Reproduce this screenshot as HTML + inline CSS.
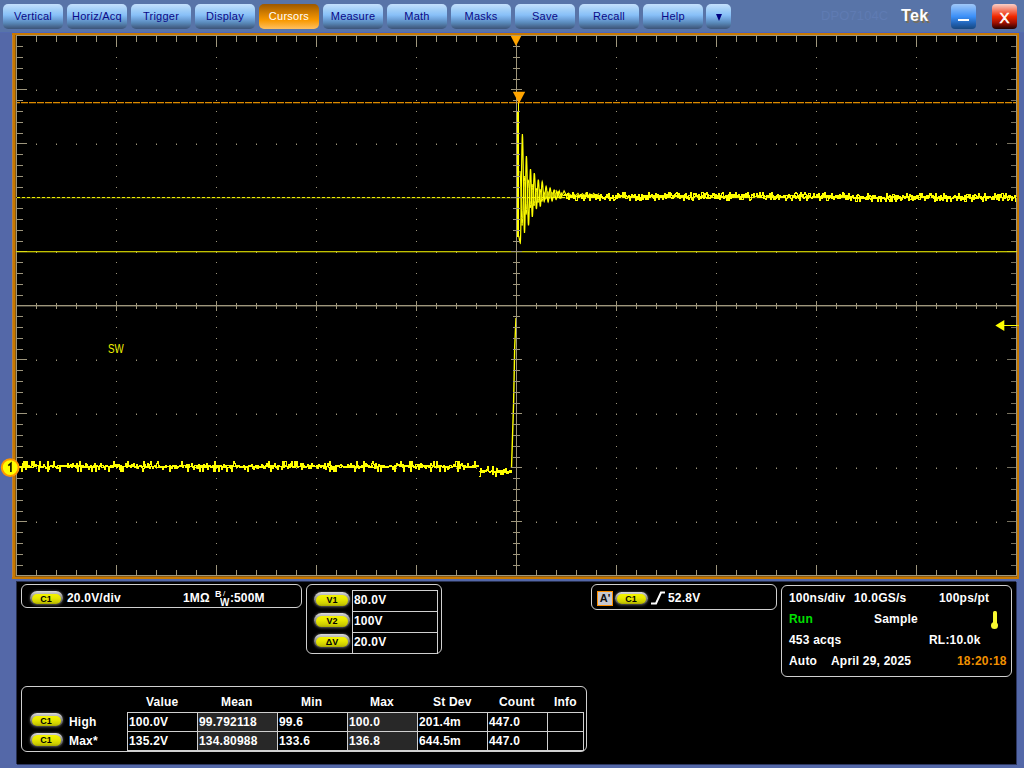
<!DOCTYPE html>
<html><head><meta charset="utf-8"><style>
*{margin:0;padding:0;box-sizing:border-box}
html,body{width:1024px;height:768px;overflow:hidden}
body{background:#5468a8;font-family:"Liberation Sans",sans-serif;position:relative}
.abs{position:absolute}
.scope{position:absolute;left:0;top:0}
.btn{position:absolute;top:4px;width:60px;height:25px;border-radius:5px;
 background:linear-gradient(#c4e0fc 0%,#a4d0f8 22%,#88c0f8 44%,#70a4dc 60%,#5888b8 76%,#486890 90%,#3c5478 100%);
 color:#0a0a88;font-size:11px;letter-spacing:0.25px;text-align:center;line-height:24px}
.btn.act{background:linear-gradient(#9c5800 0%,#d07c00 35%,#f89800 65%,#ffc060 100%);color:#fff}
.btn.dd{width:25px}
.panel{position:absolute;left:16px;top:581px;width:1000px;height:183px;background:#000;box-shadow:inset 1px 1px 0 #283050, 1px 1px 0 #2c3660}
.box{position:absolute;border:1px solid #d0d0d0;border-radius:6px}
.pill{position:absolute;border-radius:8px;background:linear-gradient(#dcdcdc 0%,#a8a8a8 30%,#686868 70%,#3a3a3a 100%);box-shadow:0 0 2px 1px rgba(45,45,45,0.9)}
.pill i{position:absolute;left:2px;right:2px;top:2.5px;bottom:1px;border-radius:7px;font-style:normal;text-align:center;font-weight:bold;color:#000;
 background:linear-gradient(#f4f400 0%,#e8e800 40%,#cccc00 80%,#a8a800 100%)}
.t{position:absolute;color:#fff;font-weight:bold;font-size:12px;white-space:nowrap;line-height:14px;letter-spacing:0.2px}
table.m{position:absolute;border-collapse:collapse}
table.m td{border:1px solid #d0d0d0;height:19px;padding:0 0 0 1px;color:#fff;font-weight:bold;font-size:12px;letter-spacing:0.2px}
</style></head><body>
<div class="abs" style="left:0;top:0;width:1024px;height:32px;background:#5874a8"></div>
<div class="abs" style="left:0;top:32px;width:1024px;height:1px;background:#536ab0"></div>
<div class="btn" style="left:3px">Vertical</div><div class="btn" style="left:67px">Horiz/Acq</div><div class="btn" style="left:131px">Trigger</div><div class="btn" style="left:195px">Display</div><div class="btn act" style="left:259px">Cursors</div><div class="btn" style="left:323px">Measure</div><div class="btn" style="left:387px">Math</div><div class="btn" style="left:451px">Masks</div><div class="btn" style="left:515px">Save</div><div class="btn" style="left:579px">Recall</div><div class="btn" style="left:643px">Help</div><div class="btn dd" style="left:706px"></div><div class="abs" style="left:715.5px;top:14px;width:0;height:0;border-left:3.5px solid transparent;border-right:3.5px solid transparent;border-top:7px solid #000080"></div>
<div class="t" style="left:821px;top:9px;color:#5f7bb3;font-size:13px;font-weight:normal;letter-spacing:0.1px">DPO7104C</div>
<div class="t" style="left:901px;top:6px;font-size:16px;line-height:20px;letter-spacing:0.4px;text-shadow:2px 2px 0 #7c7058">Tek</div>
<div class="abs" style="left:951px;top:4px;width:25px;height:25px;border-radius:4px;background:linear-gradient(#a0c8f8,#3c90f8 50%,#2060b0 80%,#184880)"></div>
<div class="abs" style="left:958px;top:19px;width:11px;height:2px;background:#fff"></div>
<div class="abs" style="left:992px;top:4px;width:25px;height:25px;border-radius:4px;background:linear-gradient(#f8d0c8,#f02800 50%,#a01000 75%,#200000)"></div>
<div class="t" style="left:992px;top:9px;width:25px;text-align:center;font-weight:normal;font-size:15px;line-height:18px;letter-spacing:0;-webkit-text-stroke:0.5px #fff">X</div>
<svg class="scope" width="1024" height="580" shape-rendering="crispEdges"><rect x="12" y="32" width="1008" height="1" fill="#4c66bc" /><rect x="12" y="33" width="1007" height="546" fill="#c87800" /><rect x="12" y="35" width="1" height="542" fill="#b88040" /><rect x="15" y="35" width="1" height="542" fill="#8a5a10" /><rect x="15" y="576" width="1002" height="1" fill="#8a5a10" /><rect x="16" y="35" width="1001" height="541" fill="#9e967c" /><rect x="17" y="36" width="999" height="539" fill="#000" /><rect x="116" y="46" width="1" height="1" fill="#9e967c" /><rect x="116" y="57" width="1" height="1" fill="#9e967c" /><rect x="116" y="68" width="1" height="1" fill="#9e967c" /><rect x="116" y="79" width="1" height="1" fill="#9e967c" /><rect x="116" y="89" width="1" height="1" fill="#9e967c" /><rect x="116" y="100" width="1" height="1" fill="#9e967c" /><rect x="116" y="111" width="1" height="1" fill="#9e967c" /><rect x="116" y="122" width="1" height="1" fill="#9e967c" /><rect x="116" y="133" width="1" height="1" fill="#9e967c" /><rect x="116" y="143" width="1" height="1" fill="#9e967c" /><rect x="116" y="154" width="1" height="1" fill="#9e967c" /><rect x="116" y="165" width="1" height="1" fill="#9e967c" /><rect x="116" y="176" width="1" height="1" fill="#9e967c" /><rect x="116" y="187" width="1" height="1" fill="#9e967c" /><rect x="116" y="197" width="1" height="1" fill="#9e967c" /><rect x="116" y="208" width="1" height="1" fill="#9e967c" /><rect x="116" y="219" width="1" height="1" fill="#9e967c" /><rect x="116" y="230" width="1" height="1" fill="#9e967c" /><rect x="116" y="241" width="1" height="1" fill="#9e967c" /><rect x="116" y="251" width="1" height="1" fill="#9e967c" /><rect x="116" y="262" width="1" height="1" fill="#9e967c" /><rect x="116" y="273" width="1" height="1" fill="#9e967c" /><rect x="116" y="284" width="1" height="1" fill="#9e967c" /><rect x="116" y="295" width="1" height="1" fill="#9e967c" /><rect x="116" y="305" width="1" height="1" fill="#9e967c" /><rect x="116" y="316" width="1" height="1" fill="#9e967c" /><rect x="116" y="327" width="1" height="1" fill="#9e967c" /><rect x="116" y="338" width="1" height="1" fill="#9e967c" /><rect x="116" y="349" width="1" height="1" fill="#9e967c" /><rect x="116" y="359" width="1" height="1" fill="#9e967c" /><rect x="116" y="370" width="1" height="1" fill="#9e967c" /><rect x="116" y="381" width="1" height="1" fill="#9e967c" /><rect x="116" y="392" width="1" height="1" fill="#9e967c" /><rect x="116" y="403" width="1" height="1" fill="#9e967c" /><rect x="116" y="413" width="1" height="1" fill="#9e967c" /><rect x="116" y="424" width="1" height="1" fill="#9e967c" /><rect x="116" y="435" width="1" height="1" fill="#9e967c" /><rect x="116" y="446" width="1" height="1" fill="#9e967c" /><rect x="116" y="457" width="1" height="1" fill="#9e967c" /><rect x="116" y="467" width="1" height="1" fill="#9e967c" /><rect x="116" y="478" width="1" height="1" fill="#9e967c" /><rect x="116" y="489" width="1" height="1" fill="#9e967c" /><rect x="116" y="500" width="1" height="1" fill="#9e967c" /><rect x="116" y="511" width="1" height="1" fill="#9e967c" /><rect x="116" y="521" width="1" height="1" fill="#9e967c" /><rect x="116" y="532" width="1" height="1" fill="#9e967c" /><rect x="116" y="543" width="1" height="1" fill="#9e967c" /><rect x="116" y="554" width="1" height="1" fill="#9e967c" /><rect x="116" y="565" width="1" height="1" fill="#9e967c" /><rect x="216" y="46" width="1" height="1" fill="#9e967c" /><rect x="216" y="57" width="1" height="1" fill="#9e967c" /><rect x="216" y="68" width="1" height="1" fill="#9e967c" /><rect x="216" y="79" width="1" height="1" fill="#9e967c" /><rect x="216" y="89" width="1" height="1" fill="#9e967c" /><rect x="216" y="100" width="1" height="1" fill="#9e967c" /><rect x="216" y="111" width="1" height="1" fill="#9e967c" /><rect x="216" y="122" width="1" height="1" fill="#9e967c" /><rect x="216" y="133" width="1" height="1" fill="#9e967c" /><rect x="216" y="143" width="1" height="1" fill="#9e967c" /><rect x="216" y="154" width="1" height="1" fill="#9e967c" /><rect x="216" y="165" width="1" height="1" fill="#9e967c" /><rect x="216" y="176" width="1" height="1" fill="#9e967c" /><rect x="216" y="187" width="1" height="1" fill="#9e967c" /><rect x="216" y="197" width="1" height="1" fill="#9e967c" /><rect x="216" y="208" width="1" height="1" fill="#9e967c" /><rect x="216" y="219" width="1" height="1" fill="#9e967c" /><rect x="216" y="230" width="1" height="1" fill="#9e967c" /><rect x="216" y="241" width="1" height="1" fill="#9e967c" /><rect x="216" y="251" width="1" height="1" fill="#9e967c" /><rect x="216" y="262" width="1" height="1" fill="#9e967c" /><rect x="216" y="273" width="1" height="1" fill="#9e967c" /><rect x="216" y="284" width="1" height="1" fill="#9e967c" /><rect x="216" y="295" width="1" height="1" fill="#9e967c" /><rect x="216" y="305" width="1" height="1" fill="#9e967c" /><rect x="216" y="316" width="1" height="1" fill="#9e967c" /><rect x="216" y="327" width="1" height="1" fill="#9e967c" /><rect x="216" y="338" width="1" height="1" fill="#9e967c" /><rect x="216" y="349" width="1" height="1" fill="#9e967c" /><rect x="216" y="359" width="1" height="1" fill="#9e967c" /><rect x="216" y="370" width="1" height="1" fill="#9e967c" /><rect x="216" y="381" width="1" height="1" fill="#9e967c" /><rect x="216" y="392" width="1" height="1" fill="#9e967c" /><rect x="216" y="403" width="1" height="1" fill="#9e967c" /><rect x="216" y="413" width="1" height="1" fill="#9e967c" /><rect x="216" y="424" width="1" height="1" fill="#9e967c" /><rect x="216" y="435" width="1" height="1" fill="#9e967c" /><rect x="216" y="446" width="1" height="1" fill="#9e967c" /><rect x="216" y="457" width="1" height="1" fill="#9e967c" /><rect x="216" y="467" width="1" height="1" fill="#9e967c" /><rect x="216" y="478" width="1" height="1" fill="#9e967c" /><rect x="216" y="489" width="1" height="1" fill="#9e967c" /><rect x="216" y="500" width="1" height="1" fill="#9e967c" /><rect x="216" y="511" width="1" height="1" fill="#9e967c" /><rect x="216" y="521" width="1" height="1" fill="#9e967c" /><rect x="216" y="532" width="1" height="1" fill="#9e967c" /><rect x="216" y="543" width="1" height="1" fill="#9e967c" /><rect x="216" y="554" width="1" height="1" fill="#9e967c" /><rect x="216" y="565" width="1" height="1" fill="#9e967c" /><rect x="316" y="46" width="1" height="1" fill="#9e967c" /><rect x="316" y="57" width="1" height="1" fill="#9e967c" /><rect x="316" y="68" width="1" height="1" fill="#9e967c" /><rect x="316" y="79" width="1" height="1" fill="#9e967c" /><rect x="316" y="89" width="1" height="1" fill="#9e967c" /><rect x="316" y="100" width="1" height="1" fill="#9e967c" /><rect x="316" y="111" width="1" height="1" fill="#9e967c" /><rect x="316" y="122" width="1" height="1" fill="#9e967c" /><rect x="316" y="133" width="1" height="1" fill="#9e967c" /><rect x="316" y="143" width="1" height="1" fill="#9e967c" /><rect x="316" y="154" width="1" height="1" fill="#9e967c" /><rect x="316" y="165" width="1" height="1" fill="#9e967c" /><rect x="316" y="176" width="1" height="1" fill="#9e967c" /><rect x="316" y="187" width="1" height="1" fill="#9e967c" /><rect x="316" y="197" width="1" height="1" fill="#9e967c" /><rect x="316" y="208" width="1" height="1" fill="#9e967c" /><rect x="316" y="219" width="1" height="1" fill="#9e967c" /><rect x="316" y="230" width="1" height="1" fill="#9e967c" /><rect x="316" y="241" width="1" height="1" fill="#9e967c" /><rect x="316" y="251" width="1" height="1" fill="#9e967c" /><rect x="316" y="262" width="1" height="1" fill="#9e967c" /><rect x="316" y="273" width="1" height="1" fill="#9e967c" /><rect x="316" y="284" width="1" height="1" fill="#9e967c" /><rect x="316" y="295" width="1" height="1" fill="#9e967c" /><rect x="316" y="305" width="1" height="1" fill="#9e967c" /><rect x="316" y="316" width="1" height="1" fill="#9e967c" /><rect x="316" y="327" width="1" height="1" fill="#9e967c" /><rect x="316" y="338" width="1" height="1" fill="#9e967c" /><rect x="316" y="349" width="1" height="1" fill="#9e967c" /><rect x="316" y="359" width="1" height="1" fill="#9e967c" /><rect x="316" y="370" width="1" height="1" fill="#9e967c" /><rect x="316" y="381" width="1" height="1" fill="#9e967c" /><rect x="316" y="392" width="1" height="1" fill="#9e967c" /><rect x="316" y="403" width="1" height="1" fill="#9e967c" /><rect x="316" y="413" width="1" height="1" fill="#9e967c" /><rect x="316" y="424" width="1" height="1" fill="#9e967c" /><rect x="316" y="435" width="1" height="1" fill="#9e967c" /><rect x="316" y="446" width="1" height="1" fill="#9e967c" /><rect x="316" y="457" width="1" height="1" fill="#9e967c" /><rect x="316" y="467" width="1" height="1" fill="#9e967c" /><rect x="316" y="478" width="1" height="1" fill="#9e967c" /><rect x="316" y="489" width="1" height="1" fill="#9e967c" /><rect x="316" y="500" width="1" height="1" fill="#9e967c" /><rect x="316" y="511" width="1" height="1" fill="#9e967c" /><rect x="316" y="521" width="1" height="1" fill="#9e967c" /><rect x="316" y="532" width="1" height="1" fill="#9e967c" /><rect x="316" y="543" width="1" height="1" fill="#9e967c" /><rect x="316" y="554" width="1" height="1" fill="#9e967c" /><rect x="316" y="565" width="1" height="1" fill="#9e967c" /><rect x="416" y="46" width="1" height="1" fill="#9e967c" /><rect x="416" y="57" width="1" height="1" fill="#9e967c" /><rect x="416" y="68" width="1" height="1" fill="#9e967c" /><rect x="416" y="79" width="1" height="1" fill="#9e967c" /><rect x="416" y="89" width="1" height="1" fill="#9e967c" /><rect x="416" y="100" width="1" height="1" fill="#9e967c" /><rect x="416" y="111" width="1" height="1" fill="#9e967c" /><rect x="416" y="122" width="1" height="1" fill="#9e967c" /><rect x="416" y="133" width="1" height="1" fill="#9e967c" /><rect x="416" y="143" width="1" height="1" fill="#9e967c" /><rect x="416" y="154" width="1" height="1" fill="#9e967c" /><rect x="416" y="165" width="1" height="1" fill="#9e967c" /><rect x="416" y="176" width="1" height="1" fill="#9e967c" /><rect x="416" y="187" width="1" height="1" fill="#9e967c" /><rect x="416" y="197" width="1" height="1" fill="#9e967c" /><rect x="416" y="208" width="1" height="1" fill="#9e967c" /><rect x="416" y="219" width="1" height="1" fill="#9e967c" /><rect x="416" y="230" width="1" height="1" fill="#9e967c" /><rect x="416" y="241" width="1" height="1" fill="#9e967c" /><rect x="416" y="251" width="1" height="1" fill="#9e967c" /><rect x="416" y="262" width="1" height="1" fill="#9e967c" /><rect x="416" y="273" width="1" height="1" fill="#9e967c" /><rect x="416" y="284" width="1" height="1" fill="#9e967c" /><rect x="416" y="295" width="1" height="1" fill="#9e967c" /><rect x="416" y="305" width="1" height="1" fill="#9e967c" /><rect x="416" y="316" width="1" height="1" fill="#9e967c" /><rect x="416" y="327" width="1" height="1" fill="#9e967c" /><rect x="416" y="338" width="1" height="1" fill="#9e967c" /><rect x="416" y="349" width="1" height="1" fill="#9e967c" /><rect x="416" y="359" width="1" height="1" fill="#9e967c" /><rect x="416" y="370" width="1" height="1" fill="#9e967c" /><rect x="416" y="381" width="1" height="1" fill="#9e967c" /><rect x="416" y="392" width="1" height="1" fill="#9e967c" /><rect x="416" y="403" width="1" height="1" fill="#9e967c" /><rect x="416" y="413" width="1" height="1" fill="#9e967c" /><rect x="416" y="424" width="1" height="1" fill="#9e967c" /><rect x="416" y="435" width="1" height="1" fill="#9e967c" /><rect x="416" y="446" width="1" height="1" fill="#9e967c" /><rect x="416" y="457" width="1" height="1" fill="#9e967c" /><rect x="416" y="467" width="1" height="1" fill="#9e967c" /><rect x="416" y="478" width="1" height="1" fill="#9e967c" /><rect x="416" y="489" width="1" height="1" fill="#9e967c" /><rect x="416" y="500" width="1" height="1" fill="#9e967c" /><rect x="416" y="511" width="1" height="1" fill="#9e967c" /><rect x="416" y="521" width="1" height="1" fill="#9e967c" /><rect x="416" y="532" width="1" height="1" fill="#9e967c" /><rect x="416" y="543" width="1" height="1" fill="#9e967c" /><rect x="416" y="554" width="1" height="1" fill="#9e967c" /><rect x="416" y="565" width="1" height="1" fill="#9e967c" /><rect x="616" y="46" width="1" height="1" fill="#9e967c" /><rect x="616" y="57" width="1" height="1" fill="#9e967c" /><rect x="616" y="68" width="1" height="1" fill="#9e967c" /><rect x="616" y="79" width="1" height="1" fill="#9e967c" /><rect x="616" y="89" width="1" height="1" fill="#9e967c" /><rect x="616" y="100" width="1" height="1" fill="#9e967c" /><rect x="616" y="111" width="1" height="1" fill="#9e967c" /><rect x="616" y="122" width="1" height="1" fill="#9e967c" /><rect x="616" y="133" width="1" height="1" fill="#9e967c" /><rect x="616" y="143" width="1" height="1" fill="#9e967c" /><rect x="616" y="154" width="1" height="1" fill="#9e967c" /><rect x="616" y="165" width="1" height="1" fill="#9e967c" /><rect x="616" y="176" width="1" height="1" fill="#9e967c" /><rect x="616" y="187" width="1" height="1" fill="#9e967c" /><rect x="616" y="197" width="1" height="1" fill="#9e967c" /><rect x="616" y="208" width="1" height="1" fill="#9e967c" /><rect x="616" y="219" width="1" height="1" fill="#9e967c" /><rect x="616" y="230" width="1" height="1" fill="#9e967c" /><rect x="616" y="241" width="1" height="1" fill="#9e967c" /><rect x="616" y="251" width="1" height="1" fill="#9e967c" /><rect x="616" y="262" width="1" height="1" fill="#9e967c" /><rect x="616" y="273" width="1" height="1" fill="#9e967c" /><rect x="616" y="284" width="1" height="1" fill="#9e967c" /><rect x="616" y="295" width="1" height="1" fill="#9e967c" /><rect x="616" y="305" width="1" height="1" fill="#9e967c" /><rect x="616" y="316" width="1" height="1" fill="#9e967c" /><rect x="616" y="327" width="1" height="1" fill="#9e967c" /><rect x="616" y="338" width="1" height="1" fill="#9e967c" /><rect x="616" y="349" width="1" height="1" fill="#9e967c" /><rect x="616" y="359" width="1" height="1" fill="#9e967c" /><rect x="616" y="370" width="1" height="1" fill="#9e967c" /><rect x="616" y="381" width="1" height="1" fill="#9e967c" /><rect x="616" y="392" width="1" height="1" fill="#9e967c" /><rect x="616" y="403" width="1" height="1" fill="#9e967c" /><rect x="616" y="413" width="1" height="1" fill="#9e967c" /><rect x="616" y="424" width="1" height="1" fill="#9e967c" /><rect x="616" y="435" width="1" height="1" fill="#9e967c" /><rect x="616" y="446" width="1" height="1" fill="#9e967c" /><rect x="616" y="457" width="1" height="1" fill="#9e967c" /><rect x="616" y="467" width="1" height="1" fill="#9e967c" /><rect x="616" y="478" width="1" height="1" fill="#9e967c" /><rect x="616" y="489" width="1" height="1" fill="#9e967c" /><rect x="616" y="500" width="1" height="1" fill="#9e967c" /><rect x="616" y="511" width="1" height="1" fill="#9e967c" /><rect x="616" y="521" width="1" height="1" fill="#9e967c" /><rect x="616" y="532" width="1" height="1" fill="#9e967c" /><rect x="616" y="543" width="1" height="1" fill="#9e967c" /><rect x="616" y="554" width="1" height="1" fill="#9e967c" /><rect x="616" y="565" width="1" height="1" fill="#9e967c" /><rect x="716" y="46" width="1" height="1" fill="#9e967c" /><rect x="716" y="57" width="1" height="1" fill="#9e967c" /><rect x="716" y="68" width="1" height="1" fill="#9e967c" /><rect x="716" y="79" width="1" height="1" fill="#9e967c" /><rect x="716" y="89" width="1" height="1" fill="#9e967c" /><rect x="716" y="100" width="1" height="1" fill="#9e967c" /><rect x="716" y="111" width="1" height="1" fill="#9e967c" /><rect x="716" y="122" width="1" height="1" fill="#9e967c" /><rect x="716" y="133" width="1" height="1" fill="#9e967c" /><rect x="716" y="143" width="1" height="1" fill="#9e967c" /><rect x="716" y="154" width="1" height="1" fill="#9e967c" /><rect x="716" y="165" width="1" height="1" fill="#9e967c" /><rect x="716" y="176" width="1" height="1" fill="#9e967c" /><rect x="716" y="187" width="1" height="1" fill="#9e967c" /><rect x="716" y="197" width="1" height="1" fill="#9e967c" /><rect x="716" y="208" width="1" height="1" fill="#9e967c" /><rect x="716" y="219" width="1" height="1" fill="#9e967c" /><rect x="716" y="230" width="1" height="1" fill="#9e967c" /><rect x="716" y="241" width="1" height="1" fill="#9e967c" /><rect x="716" y="251" width="1" height="1" fill="#9e967c" /><rect x="716" y="262" width="1" height="1" fill="#9e967c" /><rect x="716" y="273" width="1" height="1" fill="#9e967c" /><rect x="716" y="284" width="1" height="1" fill="#9e967c" /><rect x="716" y="295" width="1" height="1" fill="#9e967c" /><rect x="716" y="305" width="1" height="1" fill="#9e967c" /><rect x="716" y="316" width="1" height="1" fill="#9e967c" /><rect x="716" y="327" width="1" height="1" fill="#9e967c" /><rect x="716" y="338" width="1" height="1" fill="#9e967c" /><rect x="716" y="349" width="1" height="1" fill="#9e967c" /><rect x="716" y="359" width="1" height="1" fill="#9e967c" /><rect x="716" y="370" width="1" height="1" fill="#9e967c" /><rect x="716" y="381" width="1" height="1" fill="#9e967c" /><rect x="716" y="392" width="1" height="1" fill="#9e967c" /><rect x="716" y="403" width="1" height="1" fill="#9e967c" /><rect x="716" y="413" width="1" height="1" fill="#9e967c" /><rect x="716" y="424" width="1" height="1" fill="#9e967c" /><rect x="716" y="435" width="1" height="1" fill="#9e967c" /><rect x="716" y="446" width="1" height="1" fill="#9e967c" /><rect x="716" y="457" width="1" height="1" fill="#9e967c" /><rect x="716" y="467" width="1" height="1" fill="#9e967c" /><rect x="716" y="478" width="1" height="1" fill="#9e967c" /><rect x="716" y="489" width="1" height="1" fill="#9e967c" /><rect x="716" y="500" width="1" height="1" fill="#9e967c" /><rect x="716" y="511" width="1" height="1" fill="#9e967c" /><rect x="716" y="521" width="1" height="1" fill="#9e967c" /><rect x="716" y="532" width="1" height="1" fill="#9e967c" /><rect x="716" y="543" width="1" height="1" fill="#9e967c" /><rect x="716" y="554" width="1" height="1" fill="#9e967c" /><rect x="716" y="565" width="1" height="1" fill="#9e967c" /><rect x="816" y="46" width="1" height="1" fill="#9e967c" /><rect x="816" y="57" width="1" height="1" fill="#9e967c" /><rect x="816" y="68" width="1" height="1" fill="#9e967c" /><rect x="816" y="79" width="1" height="1" fill="#9e967c" /><rect x="816" y="89" width="1" height="1" fill="#9e967c" /><rect x="816" y="100" width="1" height="1" fill="#9e967c" /><rect x="816" y="111" width="1" height="1" fill="#9e967c" /><rect x="816" y="122" width="1" height="1" fill="#9e967c" /><rect x="816" y="133" width="1" height="1" fill="#9e967c" /><rect x="816" y="143" width="1" height="1" fill="#9e967c" /><rect x="816" y="154" width="1" height="1" fill="#9e967c" /><rect x="816" y="165" width="1" height="1" fill="#9e967c" /><rect x="816" y="176" width="1" height="1" fill="#9e967c" /><rect x="816" y="187" width="1" height="1" fill="#9e967c" /><rect x="816" y="197" width="1" height="1" fill="#9e967c" /><rect x="816" y="208" width="1" height="1" fill="#9e967c" /><rect x="816" y="219" width="1" height="1" fill="#9e967c" /><rect x="816" y="230" width="1" height="1" fill="#9e967c" /><rect x="816" y="241" width="1" height="1" fill="#9e967c" /><rect x="816" y="251" width="1" height="1" fill="#9e967c" /><rect x="816" y="262" width="1" height="1" fill="#9e967c" /><rect x="816" y="273" width="1" height="1" fill="#9e967c" /><rect x="816" y="284" width="1" height="1" fill="#9e967c" /><rect x="816" y="295" width="1" height="1" fill="#9e967c" /><rect x="816" y="305" width="1" height="1" fill="#9e967c" /><rect x="816" y="316" width="1" height="1" fill="#9e967c" /><rect x="816" y="327" width="1" height="1" fill="#9e967c" /><rect x="816" y="338" width="1" height="1" fill="#9e967c" /><rect x="816" y="349" width="1" height="1" fill="#9e967c" /><rect x="816" y="359" width="1" height="1" fill="#9e967c" /><rect x="816" y="370" width="1" height="1" fill="#9e967c" /><rect x="816" y="381" width="1" height="1" fill="#9e967c" /><rect x="816" y="392" width="1" height="1" fill="#9e967c" /><rect x="816" y="403" width="1" height="1" fill="#9e967c" /><rect x="816" y="413" width="1" height="1" fill="#9e967c" /><rect x="816" y="424" width="1" height="1" fill="#9e967c" /><rect x="816" y="435" width="1" height="1" fill="#9e967c" /><rect x="816" y="446" width="1" height="1" fill="#9e967c" /><rect x="816" y="457" width="1" height="1" fill="#9e967c" /><rect x="816" y="467" width="1" height="1" fill="#9e967c" /><rect x="816" y="478" width="1" height="1" fill="#9e967c" /><rect x="816" y="489" width="1" height="1" fill="#9e967c" /><rect x="816" y="500" width="1" height="1" fill="#9e967c" /><rect x="816" y="511" width="1" height="1" fill="#9e967c" /><rect x="816" y="521" width="1" height="1" fill="#9e967c" /><rect x="816" y="532" width="1" height="1" fill="#9e967c" /><rect x="816" y="543" width="1" height="1" fill="#9e967c" /><rect x="816" y="554" width="1" height="1" fill="#9e967c" /><rect x="816" y="565" width="1" height="1" fill="#9e967c" /><rect x="916" y="46" width="1" height="1" fill="#9e967c" /><rect x="916" y="57" width="1" height="1" fill="#9e967c" /><rect x="916" y="68" width="1" height="1" fill="#9e967c" /><rect x="916" y="79" width="1" height="1" fill="#9e967c" /><rect x="916" y="89" width="1" height="1" fill="#9e967c" /><rect x="916" y="100" width="1" height="1" fill="#9e967c" /><rect x="916" y="111" width="1" height="1" fill="#9e967c" /><rect x="916" y="122" width="1" height="1" fill="#9e967c" /><rect x="916" y="133" width="1" height="1" fill="#9e967c" /><rect x="916" y="143" width="1" height="1" fill="#9e967c" /><rect x="916" y="154" width="1" height="1" fill="#9e967c" /><rect x="916" y="165" width="1" height="1" fill="#9e967c" /><rect x="916" y="176" width="1" height="1" fill="#9e967c" /><rect x="916" y="187" width="1" height="1" fill="#9e967c" /><rect x="916" y="197" width="1" height="1" fill="#9e967c" /><rect x="916" y="208" width="1" height="1" fill="#9e967c" /><rect x="916" y="219" width="1" height="1" fill="#9e967c" /><rect x="916" y="230" width="1" height="1" fill="#9e967c" /><rect x="916" y="241" width="1" height="1" fill="#9e967c" /><rect x="916" y="251" width="1" height="1" fill="#9e967c" /><rect x="916" y="262" width="1" height="1" fill="#9e967c" /><rect x="916" y="273" width="1" height="1" fill="#9e967c" /><rect x="916" y="284" width="1" height="1" fill="#9e967c" /><rect x="916" y="295" width="1" height="1" fill="#9e967c" /><rect x="916" y="305" width="1" height="1" fill="#9e967c" /><rect x="916" y="316" width="1" height="1" fill="#9e967c" /><rect x="916" y="327" width="1" height="1" fill="#9e967c" /><rect x="916" y="338" width="1" height="1" fill="#9e967c" /><rect x="916" y="349" width="1" height="1" fill="#9e967c" /><rect x="916" y="359" width="1" height="1" fill="#9e967c" /><rect x="916" y="370" width="1" height="1" fill="#9e967c" /><rect x="916" y="381" width="1" height="1" fill="#9e967c" /><rect x="916" y="392" width="1" height="1" fill="#9e967c" /><rect x="916" y="403" width="1" height="1" fill="#9e967c" /><rect x="916" y="413" width="1" height="1" fill="#9e967c" /><rect x="916" y="424" width="1" height="1" fill="#9e967c" /><rect x="916" y="435" width="1" height="1" fill="#9e967c" /><rect x="916" y="446" width="1" height="1" fill="#9e967c" /><rect x="916" y="457" width="1" height="1" fill="#9e967c" /><rect x="916" y="467" width="1" height="1" fill="#9e967c" /><rect x="916" y="478" width="1" height="1" fill="#9e967c" /><rect x="916" y="489" width="1" height="1" fill="#9e967c" /><rect x="916" y="500" width="1" height="1" fill="#9e967c" /><rect x="916" y="511" width="1" height="1" fill="#9e967c" /><rect x="916" y="521" width="1" height="1" fill="#9e967c" /><rect x="916" y="532" width="1" height="1" fill="#9e967c" /><rect x="916" y="543" width="1" height="1" fill="#9e967c" /><rect x="916" y="554" width="1" height="1" fill="#9e967c" /><rect x="916" y="565" width="1" height="1" fill="#9e967c" /><rect x="36" y="89" width="1" height="1" fill="#4a4638" /><rect x="36" y="90" width="1" height="1" fill="#9e967c" /><rect x="56" y="89" width="1" height="1" fill="#4a4638" /><rect x="56" y="90" width="1" height="1" fill="#9e967c" /><rect x="76" y="89" width="1" height="1" fill="#4a4638" /><rect x="76" y="90" width="1" height="1" fill="#9e967c" /><rect x="96" y="89" width="1" height="1" fill="#4a4638" /><rect x="96" y="90" width="1" height="1" fill="#9e967c" /><rect x="116" y="89" width="1" height="1" fill="#4a4638" /><rect x="116" y="90" width="1" height="1" fill="#9e967c" /><rect x="136" y="89" width="1" height="1" fill="#4a4638" /><rect x="136" y="90" width="1" height="1" fill="#9e967c" /><rect x="156" y="89" width="1" height="1" fill="#4a4638" /><rect x="156" y="90" width="1" height="1" fill="#9e967c" /><rect x="176" y="89" width="1" height="1" fill="#4a4638" /><rect x="176" y="90" width="1" height="1" fill="#9e967c" /><rect x="196" y="89" width="1" height="1" fill="#4a4638" /><rect x="196" y="90" width="1" height="1" fill="#9e967c" /><rect x="216" y="89" width="1" height="1" fill="#4a4638" /><rect x="216" y="90" width="1" height="1" fill="#9e967c" /><rect x="236" y="89" width="1" height="1" fill="#4a4638" /><rect x="236" y="90" width="1" height="1" fill="#9e967c" /><rect x="256" y="89" width="1" height="1" fill="#4a4638" /><rect x="256" y="90" width="1" height="1" fill="#9e967c" /><rect x="276" y="89" width="1" height="1" fill="#4a4638" /><rect x="276" y="90" width="1" height="1" fill="#9e967c" /><rect x="296" y="89" width="1" height="1" fill="#4a4638" /><rect x="296" y="90" width="1" height="1" fill="#9e967c" /><rect x="316" y="89" width="1" height="1" fill="#4a4638" /><rect x="316" y="90" width="1" height="1" fill="#9e967c" /><rect x="336" y="89" width="1" height="1" fill="#4a4638" /><rect x="336" y="90" width="1" height="1" fill="#9e967c" /><rect x="356" y="89" width="1" height="1" fill="#4a4638" /><rect x="356" y="90" width="1" height="1" fill="#9e967c" /><rect x="376" y="89" width="1" height="1" fill="#4a4638" /><rect x="376" y="90" width="1" height="1" fill="#9e967c" /><rect x="396" y="89" width="1" height="1" fill="#4a4638" /><rect x="396" y="90" width="1" height="1" fill="#9e967c" /><rect x="416" y="89" width="1" height="1" fill="#4a4638" /><rect x="416" y="90" width="1" height="1" fill="#9e967c" /><rect x="436" y="89" width="1" height="1" fill="#4a4638" /><rect x="436" y="90" width="1" height="1" fill="#9e967c" /><rect x="456" y="89" width="1" height="1" fill="#4a4638" /><rect x="456" y="90" width="1" height="1" fill="#9e967c" /><rect x="476" y="89" width="1" height="1" fill="#4a4638" /><rect x="476" y="90" width="1" height="1" fill="#9e967c" /><rect x="496" y="89" width="1" height="1" fill="#4a4638" /><rect x="496" y="90" width="1" height="1" fill="#9e967c" /><rect x="516" y="89" width="1" height="1" fill="#4a4638" /><rect x="516" y="90" width="1" height="1" fill="#9e967c" /><rect x="536" y="89" width="1" height="1" fill="#4a4638" /><rect x="536" y="90" width="1" height="1" fill="#9e967c" /><rect x="556" y="89" width="1" height="1" fill="#4a4638" /><rect x="556" y="90" width="1" height="1" fill="#9e967c" /><rect x="576" y="89" width="1" height="1" fill="#4a4638" /><rect x="576" y="90" width="1" height="1" fill="#9e967c" /><rect x="596" y="89" width="1" height="1" fill="#4a4638" /><rect x="596" y="90" width="1" height="1" fill="#9e967c" /><rect x="616" y="89" width="1" height="1" fill="#4a4638" /><rect x="616" y="90" width="1" height="1" fill="#9e967c" /><rect x="636" y="89" width="1" height="1" fill="#4a4638" /><rect x="636" y="90" width="1" height="1" fill="#9e967c" /><rect x="656" y="89" width="1" height="1" fill="#4a4638" /><rect x="656" y="90" width="1" height="1" fill="#9e967c" /><rect x="676" y="89" width="1" height="1" fill="#4a4638" /><rect x="676" y="90" width="1" height="1" fill="#9e967c" /><rect x="696" y="89" width="1" height="1" fill="#4a4638" /><rect x="696" y="90" width="1" height="1" fill="#9e967c" /><rect x="716" y="89" width="1" height="1" fill="#4a4638" /><rect x="716" y="90" width="1" height="1" fill="#9e967c" /><rect x="736" y="89" width="1" height="1" fill="#4a4638" /><rect x="736" y="90" width="1" height="1" fill="#9e967c" /><rect x="756" y="89" width="1" height="1" fill="#4a4638" /><rect x="756" y="90" width="1" height="1" fill="#9e967c" /><rect x="776" y="89" width="1" height="1" fill="#4a4638" /><rect x="776" y="90" width="1" height="1" fill="#9e967c" /><rect x="796" y="89" width="1" height="1" fill="#4a4638" /><rect x="796" y="90" width="1" height="1" fill="#9e967c" /><rect x="816" y="89" width="1" height="1" fill="#4a4638" /><rect x="816" y="90" width="1" height="1" fill="#9e967c" /><rect x="836" y="89" width="1" height="1" fill="#4a4638" /><rect x="836" y="90" width="1" height="1" fill="#9e967c" /><rect x="856" y="89" width="1" height="1" fill="#4a4638" /><rect x="856" y="90" width="1" height="1" fill="#9e967c" /><rect x="876" y="89" width="1" height="1" fill="#4a4638" /><rect x="876" y="90" width="1" height="1" fill="#9e967c" /><rect x="896" y="89" width="1" height="1" fill="#4a4638" /><rect x="896" y="90" width="1" height="1" fill="#9e967c" /><rect x="916" y="89" width="1" height="1" fill="#4a4638" /><rect x="916" y="90" width="1" height="1" fill="#9e967c" /><rect x="936" y="89" width="1" height="1" fill="#4a4638" /><rect x="936" y="90" width="1" height="1" fill="#9e967c" /><rect x="956" y="89" width="1" height="1" fill="#4a4638" /><rect x="956" y="90" width="1" height="1" fill="#9e967c" /><rect x="976" y="89" width="1" height="1" fill="#4a4638" /><rect x="976" y="90" width="1" height="1" fill="#9e967c" /><rect x="996" y="89" width="1" height="1" fill="#4a4638" /><rect x="996" y="90" width="1" height="1" fill="#9e967c" /><rect x="36" y="143" width="1" height="1" fill="#4a4638" /><rect x="36" y="144" width="1" height="1" fill="#9e967c" /><rect x="56" y="143" width="1" height="1" fill="#4a4638" /><rect x="56" y="144" width="1" height="1" fill="#9e967c" /><rect x="76" y="143" width="1" height="1" fill="#4a4638" /><rect x="76" y="144" width="1" height="1" fill="#9e967c" /><rect x="96" y="143" width="1" height="1" fill="#4a4638" /><rect x="96" y="144" width="1" height="1" fill="#9e967c" /><rect x="116" y="143" width="1" height="1" fill="#4a4638" /><rect x="116" y="144" width="1" height="1" fill="#9e967c" /><rect x="136" y="143" width="1" height="1" fill="#4a4638" /><rect x="136" y="144" width="1" height="1" fill="#9e967c" /><rect x="156" y="143" width="1" height="1" fill="#4a4638" /><rect x="156" y="144" width="1" height="1" fill="#9e967c" /><rect x="176" y="143" width="1" height="1" fill="#4a4638" /><rect x="176" y="144" width="1" height="1" fill="#9e967c" /><rect x="196" y="143" width="1" height="1" fill="#4a4638" /><rect x="196" y="144" width="1" height="1" fill="#9e967c" /><rect x="216" y="143" width="1" height="1" fill="#4a4638" /><rect x="216" y="144" width="1" height="1" fill="#9e967c" /><rect x="236" y="143" width="1" height="1" fill="#4a4638" /><rect x="236" y="144" width="1" height="1" fill="#9e967c" /><rect x="256" y="143" width="1" height="1" fill="#4a4638" /><rect x="256" y="144" width="1" height="1" fill="#9e967c" /><rect x="276" y="143" width="1" height="1" fill="#4a4638" /><rect x="276" y="144" width="1" height="1" fill="#9e967c" /><rect x="296" y="143" width="1" height="1" fill="#4a4638" /><rect x="296" y="144" width="1" height="1" fill="#9e967c" /><rect x="316" y="143" width="1" height="1" fill="#4a4638" /><rect x="316" y="144" width="1" height="1" fill="#9e967c" /><rect x="336" y="143" width="1" height="1" fill="#4a4638" /><rect x="336" y="144" width="1" height="1" fill="#9e967c" /><rect x="356" y="143" width="1" height="1" fill="#4a4638" /><rect x="356" y="144" width="1" height="1" fill="#9e967c" /><rect x="376" y="143" width="1" height="1" fill="#4a4638" /><rect x="376" y="144" width="1" height="1" fill="#9e967c" /><rect x="396" y="143" width="1" height="1" fill="#4a4638" /><rect x="396" y="144" width="1" height="1" fill="#9e967c" /><rect x="416" y="143" width="1" height="1" fill="#4a4638" /><rect x="416" y="144" width="1" height="1" fill="#9e967c" /><rect x="436" y="143" width="1" height="1" fill="#4a4638" /><rect x="436" y="144" width="1" height="1" fill="#9e967c" /><rect x="456" y="143" width="1" height="1" fill="#4a4638" /><rect x="456" y="144" width="1" height="1" fill="#9e967c" /><rect x="476" y="143" width="1" height="1" fill="#4a4638" /><rect x="476" y="144" width="1" height="1" fill="#9e967c" /><rect x="496" y="143" width="1" height="1" fill="#4a4638" /><rect x="496" y="144" width="1" height="1" fill="#9e967c" /><rect x="516" y="143" width="1" height="1" fill="#4a4638" /><rect x="516" y="144" width="1" height="1" fill="#9e967c" /><rect x="536" y="143" width="1" height="1" fill="#4a4638" /><rect x="536" y="144" width="1" height="1" fill="#9e967c" /><rect x="556" y="143" width="1" height="1" fill="#4a4638" /><rect x="556" y="144" width="1" height="1" fill="#9e967c" /><rect x="576" y="143" width="1" height="1" fill="#4a4638" /><rect x="576" y="144" width="1" height="1" fill="#9e967c" /><rect x="596" y="143" width="1" height="1" fill="#4a4638" /><rect x="596" y="144" width="1" height="1" fill="#9e967c" /><rect x="616" y="143" width="1" height="1" fill="#4a4638" /><rect x="616" y="144" width="1" height="1" fill="#9e967c" /><rect x="636" y="143" width="1" height="1" fill="#4a4638" /><rect x="636" y="144" width="1" height="1" fill="#9e967c" /><rect x="656" y="143" width="1" height="1" fill="#4a4638" /><rect x="656" y="144" width="1" height="1" fill="#9e967c" /><rect x="676" y="143" width="1" height="1" fill="#4a4638" /><rect x="676" y="144" width="1" height="1" fill="#9e967c" /><rect x="696" y="143" width="1" height="1" fill="#4a4638" /><rect x="696" y="144" width="1" height="1" fill="#9e967c" /><rect x="716" y="143" width="1" height="1" fill="#4a4638" /><rect x="716" y="144" width="1" height="1" fill="#9e967c" /><rect x="736" y="143" width="1" height="1" fill="#4a4638" /><rect x="736" y="144" width="1" height="1" fill="#9e967c" /><rect x="756" y="143" width="1" height="1" fill="#4a4638" /><rect x="756" y="144" width="1" height="1" fill="#9e967c" /><rect x="776" y="143" width="1" height="1" fill="#4a4638" /><rect x="776" y="144" width="1" height="1" fill="#9e967c" /><rect x="796" y="143" width="1" height="1" fill="#4a4638" /><rect x="796" y="144" width="1" height="1" fill="#9e967c" /><rect x="816" y="143" width="1" height="1" fill="#4a4638" /><rect x="816" y="144" width="1" height="1" fill="#9e967c" /><rect x="836" y="143" width="1" height="1" fill="#4a4638" /><rect x="836" y="144" width="1" height="1" fill="#9e967c" /><rect x="856" y="143" width="1" height="1" fill="#4a4638" /><rect x="856" y="144" width="1" height="1" fill="#9e967c" /><rect x="876" y="143" width="1" height="1" fill="#4a4638" /><rect x="876" y="144" width="1" height="1" fill="#9e967c" /><rect x="896" y="143" width="1" height="1" fill="#4a4638" /><rect x="896" y="144" width="1" height="1" fill="#9e967c" /><rect x="916" y="143" width="1" height="1" fill="#4a4638" /><rect x="916" y="144" width="1" height="1" fill="#9e967c" /><rect x="936" y="143" width="1" height="1" fill="#4a4638" /><rect x="936" y="144" width="1" height="1" fill="#9e967c" /><rect x="956" y="143" width="1" height="1" fill="#4a4638" /><rect x="956" y="144" width="1" height="1" fill="#9e967c" /><rect x="976" y="143" width="1" height="1" fill="#4a4638" /><rect x="976" y="144" width="1" height="1" fill="#9e967c" /><rect x="996" y="143" width="1" height="1" fill="#4a4638" /><rect x="996" y="144" width="1" height="1" fill="#9e967c" /><rect x="36" y="197" width="1" height="1" fill="#4a4638" /><rect x="36" y="198" width="1" height="1" fill="#9e967c" /><rect x="56" y="197" width="1" height="1" fill="#4a4638" /><rect x="56" y="198" width="1" height="1" fill="#9e967c" /><rect x="76" y="197" width="1" height="1" fill="#4a4638" /><rect x="76" y="198" width="1" height="1" fill="#9e967c" /><rect x="96" y="197" width="1" height="1" fill="#4a4638" /><rect x="96" y="198" width="1" height="1" fill="#9e967c" /><rect x="116" y="197" width="1" height="1" fill="#4a4638" /><rect x="116" y="198" width="1" height="1" fill="#9e967c" /><rect x="136" y="197" width="1" height="1" fill="#4a4638" /><rect x="136" y="198" width="1" height="1" fill="#9e967c" /><rect x="156" y="197" width="1" height="1" fill="#4a4638" /><rect x="156" y="198" width="1" height="1" fill="#9e967c" /><rect x="176" y="197" width="1" height="1" fill="#4a4638" /><rect x="176" y="198" width="1" height="1" fill="#9e967c" /><rect x="196" y="197" width="1" height="1" fill="#4a4638" /><rect x="196" y="198" width="1" height="1" fill="#9e967c" /><rect x="216" y="197" width="1" height="1" fill="#4a4638" /><rect x="216" y="198" width="1" height="1" fill="#9e967c" /><rect x="236" y="197" width="1" height="1" fill="#4a4638" /><rect x="236" y="198" width="1" height="1" fill="#9e967c" /><rect x="256" y="197" width="1" height="1" fill="#4a4638" /><rect x="256" y="198" width="1" height="1" fill="#9e967c" /><rect x="276" y="197" width="1" height="1" fill="#4a4638" /><rect x="276" y="198" width="1" height="1" fill="#9e967c" /><rect x="296" y="197" width="1" height="1" fill="#4a4638" /><rect x="296" y="198" width="1" height="1" fill="#9e967c" /><rect x="316" y="197" width="1" height="1" fill="#4a4638" /><rect x="316" y="198" width="1" height="1" fill="#9e967c" /><rect x="336" y="197" width="1" height="1" fill="#4a4638" /><rect x="336" y="198" width="1" height="1" fill="#9e967c" /><rect x="356" y="197" width="1" height="1" fill="#4a4638" /><rect x="356" y="198" width="1" height="1" fill="#9e967c" /><rect x="376" y="197" width="1" height="1" fill="#4a4638" /><rect x="376" y="198" width="1" height="1" fill="#9e967c" /><rect x="396" y="197" width="1" height="1" fill="#4a4638" /><rect x="396" y="198" width="1" height="1" fill="#9e967c" /><rect x="416" y="197" width="1" height="1" fill="#4a4638" /><rect x="416" y="198" width="1" height="1" fill="#9e967c" /><rect x="436" y="197" width="1" height="1" fill="#4a4638" /><rect x="436" y="198" width="1" height="1" fill="#9e967c" /><rect x="456" y="197" width="1" height="1" fill="#4a4638" /><rect x="456" y="198" width="1" height="1" fill="#9e967c" /><rect x="476" y="197" width="1" height="1" fill="#4a4638" /><rect x="476" y="198" width="1" height="1" fill="#9e967c" /><rect x="496" y="197" width="1" height="1" fill="#4a4638" /><rect x="496" y="198" width="1" height="1" fill="#9e967c" /><rect x="516" y="197" width="1" height="1" fill="#4a4638" /><rect x="516" y="198" width="1" height="1" fill="#9e967c" /><rect x="536" y="197" width="1" height="1" fill="#4a4638" /><rect x="536" y="198" width="1" height="1" fill="#9e967c" /><rect x="556" y="197" width="1" height="1" fill="#4a4638" /><rect x="556" y="198" width="1" height="1" fill="#9e967c" /><rect x="576" y="197" width="1" height="1" fill="#4a4638" /><rect x="576" y="198" width="1" height="1" fill="#9e967c" /><rect x="596" y="197" width="1" height="1" fill="#4a4638" /><rect x="596" y="198" width="1" height="1" fill="#9e967c" /><rect x="616" y="197" width="1" height="1" fill="#4a4638" /><rect x="616" y="198" width="1" height="1" fill="#9e967c" /><rect x="636" y="197" width="1" height="1" fill="#4a4638" /><rect x="636" y="198" width="1" height="1" fill="#9e967c" /><rect x="656" y="197" width="1" height="1" fill="#4a4638" /><rect x="656" y="198" width="1" height="1" fill="#9e967c" /><rect x="676" y="197" width="1" height="1" fill="#4a4638" /><rect x="676" y="198" width="1" height="1" fill="#9e967c" /><rect x="696" y="197" width="1" height="1" fill="#4a4638" /><rect x="696" y="198" width="1" height="1" fill="#9e967c" /><rect x="716" y="197" width="1" height="1" fill="#4a4638" /><rect x="716" y="198" width="1" height="1" fill="#9e967c" /><rect x="736" y="197" width="1" height="1" fill="#4a4638" /><rect x="736" y="198" width="1" height="1" fill="#9e967c" /><rect x="756" y="197" width="1" height="1" fill="#4a4638" /><rect x="756" y="198" width="1" height="1" fill="#9e967c" /><rect x="776" y="197" width="1" height="1" fill="#4a4638" /><rect x="776" y="198" width="1" height="1" fill="#9e967c" /><rect x="796" y="197" width="1" height="1" fill="#4a4638" /><rect x="796" y="198" width="1" height="1" fill="#9e967c" /><rect x="816" y="197" width="1" height="1" fill="#4a4638" /><rect x="816" y="198" width="1" height="1" fill="#9e967c" /><rect x="836" y="197" width="1" height="1" fill="#4a4638" /><rect x="836" y="198" width="1" height="1" fill="#9e967c" /><rect x="856" y="197" width="1" height="1" fill="#4a4638" /><rect x="856" y="198" width="1" height="1" fill="#9e967c" /><rect x="876" y="197" width="1" height="1" fill="#4a4638" /><rect x="876" y="198" width="1" height="1" fill="#9e967c" /><rect x="896" y="197" width="1" height="1" fill="#4a4638" /><rect x="896" y="198" width="1" height="1" fill="#9e967c" /><rect x="916" y="197" width="1" height="1" fill="#4a4638" /><rect x="916" y="198" width="1" height="1" fill="#9e967c" /><rect x="936" y="197" width="1" height="1" fill="#4a4638" /><rect x="936" y="198" width="1" height="1" fill="#9e967c" /><rect x="956" y="197" width="1" height="1" fill="#4a4638" /><rect x="956" y="198" width="1" height="1" fill="#9e967c" /><rect x="976" y="197" width="1" height="1" fill="#4a4638" /><rect x="976" y="198" width="1" height="1" fill="#9e967c" /><rect x="996" y="197" width="1" height="1" fill="#4a4638" /><rect x="996" y="198" width="1" height="1" fill="#9e967c" /><rect x="36" y="251" width="1" height="1" fill="#4a4638" /><rect x="36" y="252" width="1" height="1" fill="#9e967c" /><rect x="56" y="251" width="1" height="1" fill="#4a4638" /><rect x="56" y="252" width="1" height="1" fill="#9e967c" /><rect x="76" y="251" width="1" height="1" fill="#4a4638" /><rect x="76" y="252" width="1" height="1" fill="#9e967c" /><rect x="96" y="251" width="1" height="1" fill="#4a4638" /><rect x="96" y="252" width="1" height="1" fill="#9e967c" /><rect x="116" y="251" width="1" height="1" fill="#4a4638" /><rect x="116" y="252" width="1" height="1" fill="#9e967c" /><rect x="136" y="251" width="1" height="1" fill="#4a4638" /><rect x="136" y="252" width="1" height="1" fill="#9e967c" /><rect x="156" y="251" width="1" height="1" fill="#4a4638" /><rect x="156" y="252" width="1" height="1" fill="#9e967c" /><rect x="176" y="251" width="1" height="1" fill="#4a4638" /><rect x="176" y="252" width="1" height="1" fill="#9e967c" /><rect x="196" y="251" width="1" height="1" fill="#4a4638" /><rect x="196" y="252" width="1" height="1" fill="#9e967c" /><rect x="216" y="251" width="1" height="1" fill="#4a4638" /><rect x="216" y="252" width="1" height="1" fill="#9e967c" /><rect x="236" y="251" width="1" height="1" fill="#4a4638" /><rect x="236" y="252" width="1" height="1" fill="#9e967c" /><rect x="256" y="251" width="1" height="1" fill="#4a4638" /><rect x="256" y="252" width="1" height="1" fill="#9e967c" /><rect x="276" y="251" width="1" height="1" fill="#4a4638" /><rect x="276" y="252" width="1" height="1" fill="#9e967c" /><rect x="296" y="251" width="1" height="1" fill="#4a4638" /><rect x="296" y="252" width="1" height="1" fill="#9e967c" /><rect x="316" y="251" width="1" height="1" fill="#4a4638" /><rect x="316" y="252" width="1" height="1" fill="#9e967c" /><rect x="336" y="251" width="1" height="1" fill="#4a4638" /><rect x="336" y="252" width="1" height="1" fill="#9e967c" /><rect x="356" y="251" width="1" height="1" fill="#4a4638" /><rect x="356" y="252" width="1" height="1" fill="#9e967c" /><rect x="376" y="251" width="1" height="1" fill="#4a4638" /><rect x="376" y="252" width="1" height="1" fill="#9e967c" /><rect x="396" y="251" width="1" height="1" fill="#4a4638" /><rect x="396" y="252" width="1" height="1" fill="#9e967c" /><rect x="416" y="251" width="1" height="1" fill="#4a4638" /><rect x="416" y="252" width="1" height="1" fill="#9e967c" /><rect x="436" y="251" width="1" height="1" fill="#4a4638" /><rect x="436" y="252" width="1" height="1" fill="#9e967c" /><rect x="456" y="251" width="1" height="1" fill="#4a4638" /><rect x="456" y="252" width="1" height="1" fill="#9e967c" /><rect x="476" y="251" width="1" height="1" fill="#4a4638" /><rect x="476" y="252" width="1" height="1" fill="#9e967c" /><rect x="496" y="251" width="1" height="1" fill="#4a4638" /><rect x="496" y="252" width="1" height="1" fill="#9e967c" /><rect x="516" y="251" width="1" height="1" fill="#4a4638" /><rect x="516" y="252" width="1" height="1" fill="#9e967c" /><rect x="536" y="251" width="1" height="1" fill="#4a4638" /><rect x="536" y="252" width="1" height="1" fill="#9e967c" /><rect x="556" y="251" width="1" height="1" fill="#4a4638" /><rect x="556" y="252" width="1" height="1" fill="#9e967c" /><rect x="576" y="251" width="1" height="1" fill="#4a4638" /><rect x="576" y="252" width="1" height="1" fill="#9e967c" /><rect x="596" y="251" width="1" height="1" fill="#4a4638" /><rect x="596" y="252" width="1" height="1" fill="#9e967c" /><rect x="616" y="251" width="1" height="1" fill="#4a4638" /><rect x="616" y="252" width="1" height="1" fill="#9e967c" /><rect x="636" y="251" width="1" height="1" fill="#4a4638" /><rect x="636" y="252" width="1" height="1" fill="#9e967c" /><rect x="656" y="251" width="1" height="1" fill="#4a4638" /><rect x="656" y="252" width="1" height="1" fill="#9e967c" /><rect x="676" y="251" width="1" height="1" fill="#4a4638" /><rect x="676" y="252" width="1" height="1" fill="#9e967c" /><rect x="696" y="251" width="1" height="1" fill="#4a4638" /><rect x="696" y="252" width="1" height="1" fill="#9e967c" /><rect x="716" y="251" width="1" height="1" fill="#4a4638" /><rect x="716" y="252" width="1" height="1" fill="#9e967c" /><rect x="736" y="251" width="1" height="1" fill="#4a4638" /><rect x="736" y="252" width="1" height="1" fill="#9e967c" /><rect x="756" y="251" width="1" height="1" fill="#4a4638" /><rect x="756" y="252" width="1" height="1" fill="#9e967c" /><rect x="776" y="251" width="1" height="1" fill="#4a4638" /><rect x="776" y="252" width="1" height="1" fill="#9e967c" /><rect x="796" y="251" width="1" height="1" fill="#4a4638" /><rect x="796" y="252" width="1" height="1" fill="#9e967c" /><rect x="816" y="251" width="1" height="1" fill="#4a4638" /><rect x="816" y="252" width="1" height="1" fill="#9e967c" /><rect x="836" y="251" width="1" height="1" fill="#4a4638" /><rect x="836" y="252" width="1" height="1" fill="#9e967c" /><rect x="856" y="251" width="1" height="1" fill="#4a4638" /><rect x="856" y="252" width="1" height="1" fill="#9e967c" /><rect x="876" y="251" width="1" height="1" fill="#4a4638" /><rect x="876" y="252" width="1" height="1" fill="#9e967c" /><rect x="896" y="251" width="1" height="1" fill="#4a4638" /><rect x="896" y="252" width="1" height="1" fill="#9e967c" /><rect x="916" y="251" width="1" height="1" fill="#4a4638" /><rect x="916" y="252" width="1" height="1" fill="#9e967c" /><rect x="936" y="251" width="1" height="1" fill="#4a4638" /><rect x="936" y="252" width="1" height="1" fill="#9e967c" /><rect x="956" y="251" width="1" height="1" fill="#4a4638" /><rect x="956" y="252" width="1" height="1" fill="#9e967c" /><rect x="976" y="251" width="1" height="1" fill="#4a4638" /><rect x="976" y="252" width="1" height="1" fill="#9e967c" /><rect x="996" y="251" width="1" height="1" fill="#4a4638" /><rect x="996" y="252" width="1" height="1" fill="#9e967c" /><rect x="36" y="359" width="1" height="1" fill="#4a4638" /><rect x="36" y="360" width="1" height="1" fill="#9e967c" /><rect x="56" y="359" width="1" height="1" fill="#4a4638" /><rect x="56" y="360" width="1" height="1" fill="#9e967c" /><rect x="76" y="359" width="1" height="1" fill="#4a4638" /><rect x="76" y="360" width="1" height="1" fill="#9e967c" /><rect x="96" y="359" width="1" height="1" fill="#4a4638" /><rect x="96" y="360" width="1" height="1" fill="#9e967c" /><rect x="116" y="359" width="1" height="1" fill="#4a4638" /><rect x="116" y="360" width="1" height="1" fill="#9e967c" /><rect x="136" y="359" width="1" height="1" fill="#4a4638" /><rect x="136" y="360" width="1" height="1" fill="#9e967c" /><rect x="156" y="359" width="1" height="1" fill="#4a4638" /><rect x="156" y="360" width="1" height="1" fill="#9e967c" /><rect x="176" y="359" width="1" height="1" fill="#4a4638" /><rect x="176" y="360" width="1" height="1" fill="#9e967c" /><rect x="196" y="359" width="1" height="1" fill="#4a4638" /><rect x="196" y="360" width="1" height="1" fill="#9e967c" /><rect x="216" y="359" width="1" height="1" fill="#4a4638" /><rect x="216" y="360" width="1" height="1" fill="#9e967c" /><rect x="236" y="359" width="1" height="1" fill="#4a4638" /><rect x="236" y="360" width="1" height="1" fill="#9e967c" /><rect x="256" y="359" width="1" height="1" fill="#4a4638" /><rect x="256" y="360" width="1" height="1" fill="#9e967c" /><rect x="276" y="359" width="1" height="1" fill="#4a4638" /><rect x="276" y="360" width="1" height="1" fill="#9e967c" /><rect x="296" y="359" width="1" height="1" fill="#4a4638" /><rect x="296" y="360" width="1" height="1" fill="#9e967c" /><rect x="316" y="359" width="1" height="1" fill="#4a4638" /><rect x="316" y="360" width="1" height="1" fill="#9e967c" /><rect x="336" y="359" width="1" height="1" fill="#4a4638" /><rect x="336" y="360" width="1" height="1" fill="#9e967c" /><rect x="356" y="359" width="1" height="1" fill="#4a4638" /><rect x="356" y="360" width="1" height="1" fill="#9e967c" /><rect x="376" y="359" width="1" height="1" fill="#4a4638" /><rect x="376" y="360" width="1" height="1" fill="#9e967c" /><rect x="396" y="359" width="1" height="1" fill="#4a4638" /><rect x="396" y="360" width="1" height="1" fill="#9e967c" /><rect x="416" y="359" width="1" height="1" fill="#4a4638" /><rect x="416" y="360" width="1" height="1" fill="#9e967c" /><rect x="436" y="359" width="1" height="1" fill="#4a4638" /><rect x="436" y="360" width="1" height="1" fill="#9e967c" /><rect x="456" y="359" width="1" height="1" fill="#4a4638" /><rect x="456" y="360" width="1" height="1" fill="#9e967c" /><rect x="476" y="359" width="1" height="1" fill="#4a4638" /><rect x="476" y="360" width="1" height="1" fill="#9e967c" /><rect x="496" y="359" width="1" height="1" fill="#4a4638" /><rect x="496" y="360" width="1" height="1" fill="#9e967c" /><rect x="516" y="359" width="1" height="1" fill="#4a4638" /><rect x="516" y="360" width="1" height="1" fill="#9e967c" /><rect x="536" y="359" width="1" height="1" fill="#4a4638" /><rect x="536" y="360" width="1" height="1" fill="#9e967c" /><rect x="556" y="359" width="1" height="1" fill="#4a4638" /><rect x="556" y="360" width="1" height="1" fill="#9e967c" /><rect x="576" y="359" width="1" height="1" fill="#4a4638" /><rect x="576" y="360" width="1" height="1" fill="#9e967c" /><rect x="596" y="359" width="1" height="1" fill="#4a4638" /><rect x="596" y="360" width="1" height="1" fill="#9e967c" /><rect x="616" y="359" width="1" height="1" fill="#4a4638" /><rect x="616" y="360" width="1" height="1" fill="#9e967c" /><rect x="636" y="359" width="1" height="1" fill="#4a4638" /><rect x="636" y="360" width="1" height="1" fill="#9e967c" /><rect x="656" y="359" width="1" height="1" fill="#4a4638" /><rect x="656" y="360" width="1" height="1" fill="#9e967c" /><rect x="676" y="359" width="1" height="1" fill="#4a4638" /><rect x="676" y="360" width="1" height="1" fill="#9e967c" /><rect x="696" y="359" width="1" height="1" fill="#4a4638" /><rect x="696" y="360" width="1" height="1" fill="#9e967c" /><rect x="716" y="359" width="1" height="1" fill="#4a4638" /><rect x="716" y="360" width="1" height="1" fill="#9e967c" /><rect x="736" y="359" width="1" height="1" fill="#4a4638" /><rect x="736" y="360" width="1" height="1" fill="#9e967c" /><rect x="756" y="359" width="1" height="1" fill="#4a4638" /><rect x="756" y="360" width="1" height="1" fill="#9e967c" /><rect x="776" y="359" width="1" height="1" fill="#4a4638" /><rect x="776" y="360" width="1" height="1" fill="#9e967c" /><rect x="796" y="359" width="1" height="1" fill="#4a4638" /><rect x="796" y="360" width="1" height="1" fill="#9e967c" /><rect x="816" y="359" width="1" height="1" fill="#4a4638" /><rect x="816" y="360" width="1" height="1" fill="#9e967c" /><rect x="836" y="359" width="1" height="1" fill="#4a4638" /><rect x="836" y="360" width="1" height="1" fill="#9e967c" /><rect x="856" y="359" width="1" height="1" fill="#4a4638" /><rect x="856" y="360" width="1" height="1" fill="#9e967c" /><rect x="876" y="359" width="1" height="1" fill="#4a4638" /><rect x="876" y="360" width="1" height="1" fill="#9e967c" /><rect x="896" y="359" width="1" height="1" fill="#4a4638" /><rect x="896" y="360" width="1" height="1" fill="#9e967c" /><rect x="916" y="359" width="1" height="1" fill="#4a4638" /><rect x="916" y="360" width="1" height="1" fill="#9e967c" /><rect x="936" y="359" width="1" height="1" fill="#4a4638" /><rect x="936" y="360" width="1" height="1" fill="#9e967c" /><rect x="956" y="359" width="1" height="1" fill="#4a4638" /><rect x="956" y="360" width="1" height="1" fill="#9e967c" /><rect x="976" y="359" width="1" height="1" fill="#4a4638" /><rect x="976" y="360" width="1" height="1" fill="#9e967c" /><rect x="996" y="359" width="1" height="1" fill="#4a4638" /><rect x="996" y="360" width="1" height="1" fill="#9e967c" /><rect x="36" y="413" width="1" height="1" fill="#4a4638" /><rect x="36" y="414" width="1" height="1" fill="#9e967c" /><rect x="56" y="413" width="1" height="1" fill="#4a4638" /><rect x="56" y="414" width="1" height="1" fill="#9e967c" /><rect x="76" y="413" width="1" height="1" fill="#4a4638" /><rect x="76" y="414" width="1" height="1" fill="#9e967c" /><rect x="96" y="413" width="1" height="1" fill="#4a4638" /><rect x="96" y="414" width="1" height="1" fill="#9e967c" /><rect x="116" y="413" width="1" height="1" fill="#4a4638" /><rect x="116" y="414" width="1" height="1" fill="#9e967c" /><rect x="136" y="413" width="1" height="1" fill="#4a4638" /><rect x="136" y="414" width="1" height="1" fill="#9e967c" /><rect x="156" y="413" width="1" height="1" fill="#4a4638" /><rect x="156" y="414" width="1" height="1" fill="#9e967c" /><rect x="176" y="413" width="1" height="1" fill="#4a4638" /><rect x="176" y="414" width="1" height="1" fill="#9e967c" /><rect x="196" y="413" width="1" height="1" fill="#4a4638" /><rect x="196" y="414" width="1" height="1" fill="#9e967c" /><rect x="216" y="413" width="1" height="1" fill="#4a4638" /><rect x="216" y="414" width="1" height="1" fill="#9e967c" /><rect x="236" y="413" width="1" height="1" fill="#4a4638" /><rect x="236" y="414" width="1" height="1" fill="#9e967c" /><rect x="256" y="413" width="1" height="1" fill="#4a4638" /><rect x="256" y="414" width="1" height="1" fill="#9e967c" /><rect x="276" y="413" width="1" height="1" fill="#4a4638" /><rect x="276" y="414" width="1" height="1" fill="#9e967c" /><rect x="296" y="413" width="1" height="1" fill="#4a4638" /><rect x="296" y="414" width="1" height="1" fill="#9e967c" /><rect x="316" y="413" width="1" height="1" fill="#4a4638" /><rect x="316" y="414" width="1" height="1" fill="#9e967c" /><rect x="336" y="413" width="1" height="1" fill="#4a4638" /><rect x="336" y="414" width="1" height="1" fill="#9e967c" /><rect x="356" y="413" width="1" height="1" fill="#4a4638" /><rect x="356" y="414" width="1" height="1" fill="#9e967c" /><rect x="376" y="413" width="1" height="1" fill="#4a4638" /><rect x="376" y="414" width="1" height="1" fill="#9e967c" /><rect x="396" y="413" width="1" height="1" fill="#4a4638" /><rect x="396" y="414" width="1" height="1" fill="#9e967c" /><rect x="416" y="413" width="1" height="1" fill="#4a4638" /><rect x="416" y="414" width="1" height="1" fill="#9e967c" /><rect x="436" y="413" width="1" height="1" fill="#4a4638" /><rect x="436" y="414" width="1" height="1" fill="#9e967c" /><rect x="456" y="413" width="1" height="1" fill="#4a4638" /><rect x="456" y="414" width="1" height="1" fill="#9e967c" /><rect x="476" y="413" width="1" height="1" fill="#4a4638" /><rect x="476" y="414" width="1" height="1" fill="#9e967c" /><rect x="496" y="413" width="1" height="1" fill="#4a4638" /><rect x="496" y="414" width="1" height="1" fill="#9e967c" /><rect x="516" y="413" width="1" height="1" fill="#4a4638" /><rect x="516" y="414" width="1" height="1" fill="#9e967c" /><rect x="536" y="413" width="1" height="1" fill="#4a4638" /><rect x="536" y="414" width="1" height="1" fill="#9e967c" /><rect x="556" y="413" width="1" height="1" fill="#4a4638" /><rect x="556" y="414" width="1" height="1" fill="#9e967c" /><rect x="576" y="413" width="1" height="1" fill="#4a4638" /><rect x="576" y="414" width="1" height="1" fill="#9e967c" /><rect x="596" y="413" width="1" height="1" fill="#4a4638" /><rect x="596" y="414" width="1" height="1" fill="#9e967c" /><rect x="616" y="413" width="1" height="1" fill="#4a4638" /><rect x="616" y="414" width="1" height="1" fill="#9e967c" /><rect x="636" y="413" width="1" height="1" fill="#4a4638" /><rect x="636" y="414" width="1" height="1" fill="#9e967c" /><rect x="656" y="413" width="1" height="1" fill="#4a4638" /><rect x="656" y="414" width="1" height="1" fill="#9e967c" /><rect x="676" y="413" width="1" height="1" fill="#4a4638" /><rect x="676" y="414" width="1" height="1" fill="#9e967c" /><rect x="696" y="413" width="1" height="1" fill="#4a4638" /><rect x="696" y="414" width="1" height="1" fill="#9e967c" /><rect x="716" y="413" width="1" height="1" fill="#4a4638" /><rect x="716" y="414" width="1" height="1" fill="#9e967c" /><rect x="736" y="413" width="1" height="1" fill="#4a4638" /><rect x="736" y="414" width="1" height="1" fill="#9e967c" /><rect x="756" y="413" width="1" height="1" fill="#4a4638" /><rect x="756" y="414" width="1" height="1" fill="#9e967c" /><rect x="776" y="413" width="1" height="1" fill="#4a4638" /><rect x="776" y="414" width="1" height="1" fill="#9e967c" /><rect x="796" y="413" width="1" height="1" fill="#4a4638" /><rect x="796" y="414" width="1" height="1" fill="#9e967c" /><rect x="816" y="413" width="1" height="1" fill="#4a4638" /><rect x="816" y="414" width="1" height="1" fill="#9e967c" /><rect x="836" y="413" width="1" height="1" fill="#4a4638" /><rect x="836" y="414" width="1" height="1" fill="#9e967c" /><rect x="856" y="413" width="1" height="1" fill="#4a4638" /><rect x="856" y="414" width="1" height="1" fill="#9e967c" /><rect x="876" y="413" width="1" height="1" fill="#4a4638" /><rect x="876" y="414" width="1" height="1" fill="#9e967c" /><rect x="896" y="413" width="1" height="1" fill="#4a4638" /><rect x="896" y="414" width="1" height="1" fill="#9e967c" /><rect x="916" y="413" width="1" height="1" fill="#4a4638" /><rect x="916" y="414" width="1" height="1" fill="#9e967c" /><rect x="936" y="413" width="1" height="1" fill="#4a4638" /><rect x="936" y="414" width="1" height="1" fill="#9e967c" /><rect x="956" y="413" width="1" height="1" fill="#4a4638" /><rect x="956" y="414" width="1" height="1" fill="#9e967c" /><rect x="976" y="413" width="1" height="1" fill="#4a4638" /><rect x="976" y="414" width="1" height="1" fill="#9e967c" /><rect x="996" y="413" width="1" height="1" fill="#4a4638" /><rect x="996" y="414" width="1" height="1" fill="#9e967c" /><rect x="36" y="467" width="1" height="1" fill="#4a4638" /><rect x="36" y="468" width="1" height="1" fill="#9e967c" /><rect x="56" y="467" width="1" height="1" fill="#4a4638" /><rect x="56" y="468" width="1" height="1" fill="#9e967c" /><rect x="76" y="467" width="1" height="1" fill="#4a4638" /><rect x="76" y="468" width="1" height="1" fill="#9e967c" /><rect x="96" y="467" width="1" height="1" fill="#4a4638" /><rect x="96" y="468" width="1" height="1" fill="#9e967c" /><rect x="116" y="467" width="1" height="1" fill="#4a4638" /><rect x="116" y="468" width="1" height="1" fill="#9e967c" /><rect x="136" y="467" width="1" height="1" fill="#4a4638" /><rect x="136" y="468" width="1" height="1" fill="#9e967c" /><rect x="156" y="467" width="1" height="1" fill="#4a4638" /><rect x="156" y="468" width="1" height="1" fill="#9e967c" /><rect x="176" y="467" width="1" height="1" fill="#4a4638" /><rect x="176" y="468" width="1" height="1" fill="#9e967c" /><rect x="196" y="467" width="1" height="1" fill="#4a4638" /><rect x="196" y="468" width="1" height="1" fill="#9e967c" /><rect x="216" y="467" width="1" height="1" fill="#4a4638" /><rect x="216" y="468" width="1" height="1" fill="#9e967c" /><rect x="236" y="467" width="1" height="1" fill="#4a4638" /><rect x="236" y="468" width="1" height="1" fill="#9e967c" /><rect x="256" y="467" width="1" height="1" fill="#4a4638" /><rect x="256" y="468" width="1" height="1" fill="#9e967c" /><rect x="276" y="467" width="1" height="1" fill="#4a4638" /><rect x="276" y="468" width="1" height="1" fill="#9e967c" /><rect x="296" y="467" width="1" height="1" fill="#4a4638" /><rect x="296" y="468" width="1" height="1" fill="#9e967c" /><rect x="316" y="467" width="1" height="1" fill="#4a4638" /><rect x="316" y="468" width="1" height="1" fill="#9e967c" /><rect x="336" y="467" width="1" height="1" fill="#4a4638" /><rect x="336" y="468" width="1" height="1" fill="#9e967c" /><rect x="356" y="467" width="1" height="1" fill="#4a4638" /><rect x="356" y="468" width="1" height="1" fill="#9e967c" /><rect x="376" y="467" width="1" height="1" fill="#4a4638" /><rect x="376" y="468" width="1" height="1" fill="#9e967c" /><rect x="396" y="467" width="1" height="1" fill="#4a4638" /><rect x="396" y="468" width="1" height="1" fill="#9e967c" /><rect x="416" y="467" width="1" height="1" fill="#4a4638" /><rect x="416" y="468" width="1" height="1" fill="#9e967c" /><rect x="436" y="467" width="1" height="1" fill="#4a4638" /><rect x="436" y="468" width="1" height="1" fill="#9e967c" /><rect x="456" y="467" width="1" height="1" fill="#4a4638" /><rect x="456" y="468" width="1" height="1" fill="#9e967c" /><rect x="476" y="467" width="1" height="1" fill="#4a4638" /><rect x="476" y="468" width="1" height="1" fill="#9e967c" /><rect x="496" y="467" width="1" height="1" fill="#4a4638" /><rect x="496" y="468" width="1" height="1" fill="#9e967c" /><rect x="516" y="467" width="1" height="1" fill="#4a4638" /><rect x="516" y="468" width="1" height="1" fill="#9e967c" /><rect x="536" y="467" width="1" height="1" fill="#4a4638" /><rect x="536" y="468" width="1" height="1" fill="#9e967c" /><rect x="556" y="467" width="1" height="1" fill="#4a4638" /><rect x="556" y="468" width="1" height="1" fill="#9e967c" /><rect x="576" y="467" width="1" height="1" fill="#4a4638" /><rect x="576" y="468" width="1" height="1" fill="#9e967c" /><rect x="596" y="467" width="1" height="1" fill="#4a4638" /><rect x="596" y="468" width="1" height="1" fill="#9e967c" /><rect x="616" y="467" width="1" height="1" fill="#4a4638" /><rect x="616" y="468" width="1" height="1" fill="#9e967c" /><rect x="636" y="467" width="1" height="1" fill="#4a4638" /><rect x="636" y="468" width="1" height="1" fill="#9e967c" /><rect x="656" y="467" width="1" height="1" fill="#4a4638" /><rect x="656" y="468" width="1" height="1" fill="#9e967c" /><rect x="676" y="467" width="1" height="1" fill="#4a4638" /><rect x="676" y="468" width="1" height="1" fill="#9e967c" /><rect x="696" y="467" width="1" height="1" fill="#4a4638" /><rect x="696" y="468" width="1" height="1" fill="#9e967c" /><rect x="716" y="467" width="1" height="1" fill="#4a4638" /><rect x="716" y="468" width="1" height="1" fill="#9e967c" /><rect x="736" y="467" width="1" height="1" fill="#4a4638" /><rect x="736" y="468" width="1" height="1" fill="#9e967c" /><rect x="756" y="467" width="1" height="1" fill="#4a4638" /><rect x="756" y="468" width="1" height="1" fill="#9e967c" /><rect x="776" y="467" width="1" height="1" fill="#4a4638" /><rect x="776" y="468" width="1" height="1" fill="#9e967c" /><rect x="796" y="467" width="1" height="1" fill="#4a4638" /><rect x="796" y="468" width="1" height="1" fill="#9e967c" /><rect x="816" y="467" width="1" height="1" fill="#4a4638" /><rect x="816" y="468" width="1" height="1" fill="#9e967c" /><rect x="836" y="467" width="1" height="1" fill="#4a4638" /><rect x="836" y="468" width="1" height="1" fill="#9e967c" /><rect x="856" y="467" width="1" height="1" fill="#4a4638" /><rect x="856" y="468" width="1" height="1" fill="#9e967c" /><rect x="876" y="467" width="1" height="1" fill="#4a4638" /><rect x="876" y="468" width="1" height="1" fill="#9e967c" /><rect x="896" y="467" width="1" height="1" fill="#4a4638" /><rect x="896" y="468" width="1" height="1" fill="#9e967c" /><rect x="916" y="467" width="1" height="1" fill="#4a4638" /><rect x="916" y="468" width="1" height="1" fill="#9e967c" /><rect x="936" y="467" width="1" height="1" fill="#4a4638" /><rect x="936" y="468" width="1" height="1" fill="#9e967c" /><rect x="956" y="467" width="1" height="1" fill="#4a4638" /><rect x="956" y="468" width="1" height="1" fill="#9e967c" /><rect x="976" y="467" width="1" height="1" fill="#4a4638" /><rect x="976" y="468" width="1" height="1" fill="#9e967c" /><rect x="996" y="467" width="1" height="1" fill="#4a4638" /><rect x="996" y="468" width="1" height="1" fill="#9e967c" /><rect x="36" y="521" width="1" height="1" fill="#4a4638" /><rect x="36" y="522" width="1" height="1" fill="#9e967c" /><rect x="56" y="521" width="1" height="1" fill="#4a4638" /><rect x="56" y="522" width="1" height="1" fill="#9e967c" /><rect x="76" y="521" width="1" height="1" fill="#4a4638" /><rect x="76" y="522" width="1" height="1" fill="#9e967c" /><rect x="96" y="521" width="1" height="1" fill="#4a4638" /><rect x="96" y="522" width="1" height="1" fill="#9e967c" /><rect x="116" y="521" width="1" height="1" fill="#4a4638" /><rect x="116" y="522" width="1" height="1" fill="#9e967c" /><rect x="136" y="521" width="1" height="1" fill="#4a4638" /><rect x="136" y="522" width="1" height="1" fill="#9e967c" /><rect x="156" y="521" width="1" height="1" fill="#4a4638" /><rect x="156" y="522" width="1" height="1" fill="#9e967c" /><rect x="176" y="521" width="1" height="1" fill="#4a4638" /><rect x="176" y="522" width="1" height="1" fill="#9e967c" /><rect x="196" y="521" width="1" height="1" fill="#4a4638" /><rect x="196" y="522" width="1" height="1" fill="#9e967c" /><rect x="216" y="521" width="1" height="1" fill="#4a4638" /><rect x="216" y="522" width="1" height="1" fill="#9e967c" /><rect x="236" y="521" width="1" height="1" fill="#4a4638" /><rect x="236" y="522" width="1" height="1" fill="#9e967c" /><rect x="256" y="521" width="1" height="1" fill="#4a4638" /><rect x="256" y="522" width="1" height="1" fill="#9e967c" /><rect x="276" y="521" width="1" height="1" fill="#4a4638" /><rect x="276" y="522" width="1" height="1" fill="#9e967c" /><rect x="296" y="521" width="1" height="1" fill="#4a4638" /><rect x="296" y="522" width="1" height="1" fill="#9e967c" /><rect x="316" y="521" width="1" height="1" fill="#4a4638" /><rect x="316" y="522" width="1" height="1" fill="#9e967c" /><rect x="336" y="521" width="1" height="1" fill="#4a4638" /><rect x="336" y="522" width="1" height="1" fill="#9e967c" /><rect x="356" y="521" width="1" height="1" fill="#4a4638" /><rect x="356" y="522" width="1" height="1" fill="#9e967c" /><rect x="376" y="521" width="1" height="1" fill="#4a4638" /><rect x="376" y="522" width="1" height="1" fill="#9e967c" /><rect x="396" y="521" width="1" height="1" fill="#4a4638" /><rect x="396" y="522" width="1" height="1" fill="#9e967c" /><rect x="416" y="521" width="1" height="1" fill="#4a4638" /><rect x="416" y="522" width="1" height="1" fill="#9e967c" /><rect x="436" y="521" width="1" height="1" fill="#4a4638" /><rect x="436" y="522" width="1" height="1" fill="#9e967c" /><rect x="456" y="521" width="1" height="1" fill="#4a4638" /><rect x="456" y="522" width="1" height="1" fill="#9e967c" /><rect x="476" y="521" width="1" height="1" fill="#4a4638" /><rect x="476" y="522" width="1" height="1" fill="#9e967c" /><rect x="496" y="521" width="1" height="1" fill="#4a4638" /><rect x="496" y="522" width="1" height="1" fill="#9e967c" /><rect x="516" y="521" width="1" height="1" fill="#4a4638" /><rect x="516" y="522" width="1" height="1" fill="#9e967c" /><rect x="536" y="521" width="1" height="1" fill="#4a4638" /><rect x="536" y="522" width="1" height="1" fill="#9e967c" /><rect x="556" y="521" width="1" height="1" fill="#4a4638" /><rect x="556" y="522" width="1" height="1" fill="#9e967c" /><rect x="576" y="521" width="1" height="1" fill="#4a4638" /><rect x="576" y="522" width="1" height="1" fill="#9e967c" /><rect x="596" y="521" width="1" height="1" fill="#4a4638" /><rect x="596" y="522" width="1" height="1" fill="#9e967c" /><rect x="616" y="521" width="1" height="1" fill="#4a4638" /><rect x="616" y="522" width="1" height="1" fill="#9e967c" /><rect x="636" y="521" width="1" height="1" fill="#4a4638" /><rect x="636" y="522" width="1" height="1" fill="#9e967c" /><rect x="656" y="521" width="1" height="1" fill="#4a4638" /><rect x="656" y="522" width="1" height="1" fill="#9e967c" /><rect x="676" y="521" width="1" height="1" fill="#4a4638" /><rect x="676" y="522" width="1" height="1" fill="#9e967c" /><rect x="696" y="521" width="1" height="1" fill="#4a4638" /><rect x="696" y="522" width="1" height="1" fill="#9e967c" /><rect x="716" y="521" width="1" height="1" fill="#4a4638" /><rect x="716" y="522" width="1" height="1" fill="#9e967c" /><rect x="736" y="521" width="1" height="1" fill="#4a4638" /><rect x="736" y="522" width="1" height="1" fill="#9e967c" /><rect x="756" y="521" width="1" height="1" fill="#4a4638" /><rect x="756" y="522" width="1" height="1" fill="#9e967c" /><rect x="776" y="521" width="1" height="1" fill="#4a4638" /><rect x="776" y="522" width="1" height="1" fill="#9e967c" /><rect x="796" y="521" width="1" height="1" fill="#4a4638" /><rect x="796" y="522" width="1" height="1" fill="#9e967c" /><rect x="816" y="521" width="1" height="1" fill="#4a4638" /><rect x="816" y="522" width="1" height="1" fill="#9e967c" /><rect x="836" y="521" width="1" height="1" fill="#4a4638" /><rect x="836" y="522" width="1" height="1" fill="#9e967c" /><rect x="856" y="521" width="1" height="1" fill="#4a4638" /><rect x="856" y="522" width="1" height="1" fill="#9e967c" /><rect x="876" y="521" width="1" height="1" fill="#4a4638" /><rect x="876" y="522" width="1" height="1" fill="#9e967c" /><rect x="896" y="521" width="1" height="1" fill="#4a4638" /><rect x="896" y="522" width="1" height="1" fill="#9e967c" /><rect x="916" y="521" width="1" height="1" fill="#4a4638" /><rect x="916" y="522" width="1" height="1" fill="#9e967c" /><rect x="936" y="521" width="1" height="1" fill="#4a4638" /><rect x="936" y="522" width="1" height="1" fill="#9e967c" /><rect x="956" y="521" width="1" height="1" fill="#4a4638" /><rect x="956" y="522" width="1" height="1" fill="#9e967c" /><rect x="976" y="521" width="1" height="1" fill="#4a4638" /><rect x="976" y="522" width="1" height="1" fill="#9e967c" /><rect x="996" y="521" width="1" height="1" fill="#4a4638" /><rect x="996" y="522" width="1" height="1" fill="#9e967c" /><rect x="36" y="36" width="1" height="6" fill="#9e967c" /><rect x="36" y="570" width="1" height="5" fill="#9e967c" /><rect x="56" y="36" width="1" height="6" fill="#9e967c" /><rect x="56" y="570" width="1" height="5" fill="#9e967c" /><rect x="76" y="36" width="1" height="6" fill="#9e967c" /><rect x="76" y="570" width="1" height="5" fill="#9e967c" /><rect x="96" y="36" width="1" height="6" fill="#9e967c" /><rect x="96" y="570" width="1" height="5" fill="#9e967c" /><rect x="116" y="36" width="1" height="10" fill="#9e967c" /><rect x="116" y="566" width="1" height="9" fill="#9e967c" /><rect x="136" y="36" width="1" height="6" fill="#9e967c" /><rect x="136" y="570" width="1" height="5" fill="#9e967c" /><rect x="156" y="36" width="1" height="6" fill="#9e967c" /><rect x="156" y="570" width="1" height="5" fill="#9e967c" /><rect x="176" y="36" width="1" height="6" fill="#9e967c" /><rect x="176" y="570" width="1" height="5" fill="#9e967c" /><rect x="196" y="36" width="1" height="6" fill="#9e967c" /><rect x="196" y="570" width="1" height="5" fill="#9e967c" /><rect x="216" y="36" width="1" height="10" fill="#9e967c" /><rect x="216" y="566" width="1" height="9" fill="#9e967c" /><rect x="236" y="36" width="1" height="6" fill="#9e967c" /><rect x="236" y="570" width="1" height="5" fill="#9e967c" /><rect x="256" y="36" width="1" height="6" fill="#9e967c" /><rect x="256" y="570" width="1" height="5" fill="#9e967c" /><rect x="276" y="36" width="1" height="6" fill="#9e967c" /><rect x="276" y="570" width="1" height="5" fill="#9e967c" /><rect x="296" y="36" width="1" height="6" fill="#9e967c" /><rect x="296" y="570" width="1" height="5" fill="#9e967c" /><rect x="316" y="36" width="1" height="10" fill="#9e967c" /><rect x="316" y="566" width="1" height="9" fill="#9e967c" /><rect x="336" y="36" width="1" height="6" fill="#9e967c" /><rect x="336" y="570" width="1" height="5" fill="#9e967c" /><rect x="356" y="36" width="1" height="6" fill="#9e967c" /><rect x="356" y="570" width="1" height="5" fill="#9e967c" /><rect x="376" y="36" width="1" height="6" fill="#9e967c" /><rect x="376" y="570" width="1" height="5" fill="#9e967c" /><rect x="396" y="36" width="1" height="6" fill="#9e967c" /><rect x="396" y="570" width="1" height="5" fill="#9e967c" /><rect x="416" y="36" width="1" height="10" fill="#9e967c" /><rect x="416" y="566" width="1" height="9" fill="#9e967c" /><rect x="436" y="36" width="1" height="6" fill="#9e967c" /><rect x="436" y="570" width="1" height="5" fill="#9e967c" /><rect x="456" y="36" width="1" height="6" fill="#9e967c" /><rect x="456" y="570" width="1" height="5" fill="#9e967c" /><rect x="476" y="36" width="1" height="6" fill="#9e967c" /><rect x="476" y="570" width="1" height="5" fill="#9e967c" /><rect x="496" y="36" width="1" height="6" fill="#9e967c" /><rect x="496" y="570" width="1" height="5" fill="#9e967c" /><rect x="516" y="36" width="1" height="10" fill="#9e967c" /><rect x="516" y="566" width="1" height="9" fill="#9e967c" /><rect x="536" y="36" width="1" height="6" fill="#9e967c" /><rect x="536" y="570" width="1" height="5" fill="#9e967c" /><rect x="556" y="36" width="1" height="6" fill="#9e967c" /><rect x="556" y="570" width="1" height="5" fill="#9e967c" /><rect x="576" y="36" width="1" height="6" fill="#9e967c" /><rect x="576" y="570" width="1" height="5" fill="#9e967c" /><rect x="596" y="36" width="1" height="6" fill="#9e967c" /><rect x="596" y="570" width="1" height="5" fill="#9e967c" /><rect x="616" y="36" width="1" height="10" fill="#9e967c" /><rect x="616" y="566" width="1" height="9" fill="#9e967c" /><rect x="636" y="36" width="1" height="6" fill="#9e967c" /><rect x="636" y="570" width="1" height="5" fill="#9e967c" /><rect x="656" y="36" width="1" height="6" fill="#9e967c" /><rect x="656" y="570" width="1" height="5" fill="#9e967c" /><rect x="676" y="36" width="1" height="6" fill="#9e967c" /><rect x="676" y="570" width="1" height="5" fill="#9e967c" /><rect x="696" y="36" width="1" height="6" fill="#9e967c" /><rect x="696" y="570" width="1" height="5" fill="#9e967c" /><rect x="716" y="36" width="1" height="10" fill="#9e967c" /><rect x="716" y="566" width="1" height="9" fill="#9e967c" /><rect x="736" y="36" width="1" height="6" fill="#9e967c" /><rect x="736" y="570" width="1" height="5" fill="#9e967c" /><rect x="756" y="36" width="1" height="6" fill="#9e967c" /><rect x="756" y="570" width="1" height="5" fill="#9e967c" /><rect x="776" y="36" width="1" height="6" fill="#9e967c" /><rect x="776" y="570" width="1" height="5" fill="#9e967c" /><rect x="796" y="36" width="1" height="6" fill="#9e967c" /><rect x="796" y="570" width="1" height="5" fill="#9e967c" /><rect x="816" y="36" width="1" height="10" fill="#9e967c" /><rect x="816" y="566" width="1" height="9" fill="#9e967c" /><rect x="836" y="36" width="1" height="6" fill="#9e967c" /><rect x="836" y="570" width="1" height="5" fill="#9e967c" /><rect x="856" y="36" width="1" height="6" fill="#9e967c" /><rect x="856" y="570" width="1" height="5" fill="#9e967c" /><rect x="876" y="36" width="1" height="6" fill="#9e967c" /><rect x="876" y="570" width="1" height="5" fill="#9e967c" /><rect x="896" y="36" width="1" height="6" fill="#9e967c" /><rect x="896" y="570" width="1" height="5" fill="#9e967c" /><rect x="916" y="36" width="1" height="10" fill="#9e967c" /><rect x="916" y="566" width="1" height="9" fill="#9e967c" /><rect x="936" y="36" width="1" height="6" fill="#9e967c" /><rect x="936" y="570" width="1" height="5" fill="#9e967c" /><rect x="956" y="36" width="1" height="6" fill="#9e967c" /><rect x="956" y="570" width="1" height="5" fill="#9e967c" /><rect x="976" y="36" width="1" height="6" fill="#9e967c" /><rect x="976" y="570" width="1" height="5" fill="#9e967c" /><rect x="996" y="36" width="1" height="6" fill="#9e967c" /><rect x="996" y="570" width="1" height="5" fill="#9e967c" /><rect x="17" y="46" width="6" height="1" fill="#9e967c" /><rect x="1011" y="46" width="5" height="1" fill="#77715e" /><rect x="17" y="57" width="6" height="1" fill="#9e967c" /><rect x="1011" y="57" width="5" height="1" fill="#77715e" /><rect x="17" y="68" width="6" height="1" fill="#9e967c" /><rect x="1011" y="68" width="5" height="1" fill="#77715e" /><rect x="17" y="79" width="6" height="1" fill="#9e967c" /><rect x="1011" y="79" width="5" height="1" fill="#77715e" /><rect x="17" y="89" width="10" height="1" fill="#9e967c" /><rect x="1007" y="89" width="9" height="1" fill="#77715e" /><rect x="17" y="100" width="6" height="1" fill="#9e967c" /><rect x="1011" y="100" width="5" height="1" fill="#77715e" /><rect x="17" y="111" width="6" height="1" fill="#9e967c" /><rect x="1011" y="111" width="5" height="1" fill="#77715e" /><rect x="17" y="122" width="6" height="1" fill="#9e967c" /><rect x="1011" y="122" width="5" height="1" fill="#77715e" /><rect x="17" y="133" width="6" height="1" fill="#9e967c" /><rect x="1011" y="133" width="5" height="1" fill="#77715e" /><rect x="17" y="143" width="10" height="1" fill="#9e967c" /><rect x="1007" y="143" width="9" height="1" fill="#77715e" /><rect x="17" y="154" width="6" height="1" fill="#9e967c" /><rect x="1011" y="154" width="5" height="1" fill="#77715e" /><rect x="17" y="165" width="6" height="1" fill="#9e967c" /><rect x="1011" y="165" width="5" height="1" fill="#77715e" /><rect x="17" y="176" width="6" height="1" fill="#9e967c" /><rect x="1011" y="176" width="5" height="1" fill="#77715e" /><rect x="17" y="187" width="6" height="1" fill="#9e967c" /><rect x="1011" y="187" width="5" height="1" fill="#77715e" /><rect x="17" y="197" width="10" height="1" fill="#9e967c" /><rect x="1007" y="197" width="9" height="1" fill="#77715e" /><rect x="17" y="208" width="6" height="1" fill="#9e967c" /><rect x="1011" y="208" width="5" height="1" fill="#77715e" /><rect x="17" y="219" width="6" height="1" fill="#9e967c" /><rect x="1011" y="219" width="5" height="1" fill="#77715e" /><rect x="17" y="230" width="6" height="1" fill="#9e967c" /><rect x="1011" y="230" width="5" height="1" fill="#77715e" /><rect x="17" y="241" width="6" height="1" fill="#9e967c" /><rect x="1011" y="241" width="5" height="1" fill="#77715e" /><rect x="17" y="251" width="10" height="1" fill="#9e967c" /><rect x="1007" y="251" width="9" height="1" fill="#77715e" /><rect x="17" y="262" width="6" height="1" fill="#9e967c" /><rect x="1011" y="262" width="5" height="1" fill="#77715e" /><rect x="17" y="273" width="6" height="1" fill="#9e967c" /><rect x="1011" y="273" width="5" height="1" fill="#77715e" /><rect x="17" y="284" width="6" height="1" fill="#9e967c" /><rect x="1011" y="284" width="5" height="1" fill="#77715e" /><rect x="17" y="295" width="6" height="1" fill="#9e967c" /><rect x="1011" y="295" width="5" height="1" fill="#77715e" /><rect x="17" y="305" width="10" height="1" fill="#9e967c" /><rect x="1007" y="305" width="9" height="1" fill="#77715e" /><rect x="17" y="316" width="6" height="1" fill="#9e967c" /><rect x="1011" y="316" width="5" height="1" fill="#77715e" /><rect x="17" y="327" width="6" height="1" fill="#9e967c" /><rect x="1011" y="327" width="5" height="1" fill="#77715e" /><rect x="17" y="338" width="6" height="1" fill="#9e967c" /><rect x="1011" y="338" width="5" height="1" fill="#77715e" /><rect x="17" y="349" width="6" height="1" fill="#9e967c" /><rect x="1011" y="349" width="5" height="1" fill="#77715e" /><rect x="17" y="359" width="10" height="1" fill="#9e967c" /><rect x="1007" y="359" width="9" height="1" fill="#77715e" /><rect x="17" y="370" width="6" height="1" fill="#9e967c" /><rect x="1011" y="370" width="5" height="1" fill="#77715e" /><rect x="17" y="381" width="6" height="1" fill="#9e967c" /><rect x="1011" y="381" width="5" height="1" fill="#77715e" /><rect x="17" y="392" width="6" height="1" fill="#9e967c" /><rect x="1011" y="392" width="5" height="1" fill="#77715e" /><rect x="17" y="403" width="6" height="1" fill="#9e967c" /><rect x="1011" y="403" width="5" height="1" fill="#77715e" /><rect x="17" y="413" width="10" height="1" fill="#9e967c" /><rect x="1007" y="413" width="9" height="1" fill="#77715e" /><rect x="17" y="424" width="6" height="1" fill="#9e967c" /><rect x="1011" y="424" width="5" height="1" fill="#77715e" /><rect x="17" y="435" width="6" height="1" fill="#9e967c" /><rect x="1011" y="435" width="5" height="1" fill="#77715e" /><rect x="17" y="446" width="6" height="1" fill="#9e967c" /><rect x="1011" y="446" width="5" height="1" fill="#77715e" /><rect x="17" y="457" width="6" height="1" fill="#9e967c" /><rect x="1011" y="457" width="5" height="1" fill="#77715e" /><rect x="17" y="467" width="10" height="1" fill="#9e967c" /><rect x="1007" y="467" width="9" height="1" fill="#77715e" /><rect x="17" y="478" width="6" height="1" fill="#9e967c" /><rect x="1011" y="478" width="5" height="1" fill="#77715e" /><rect x="17" y="489" width="6" height="1" fill="#9e967c" /><rect x="1011" y="489" width="5" height="1" fill="#77715e" /><rect x="17" y="500" width="6" height="1" fill="#9e967c" /><rect x="1011" y="500" width="5" height="1" fill="#77715e" /><rect x="17" y="511" width="6" height="1" fill="#9e967c" /><rect x="1011" y="511" width="5" height="1" fill="#77715e" /><rect x="17" y="521" width="10" height="1" fill="#9e967c" /><rect x="1007" y="521" width="9" height="1" fill="#77715e" /><rect x="17" y="532" width="6" height="1" fill="#9e967c" /><rect x="1011" y="532" width="5" height="1" fill="#77715e" /><rect x="17" y="543" width="6" height="1" fill="#9e967c" /><rect x="1011" y="543" width="5" height="1" fill="#77715e" /><rect x="17" y="554" width="6" height="1" fill="#9e967c" /><rect x="1011" y="554" width="5" height="1" fill="#77715e" /><rect x="17" y="565" width="6" height="1" fill="#9e967c" /><rect x="1011" y="565" width="5" height="1" fill="#77715e" /><rect x="17" y="305" width="999" height="1" fill="#9e967c" /><rect x="17" y="306" width="999" height="1" fill="#3c3a30" /><rect x="36" y="303" width="1" height="6" fill="#9e967c" /><rect x="56" y="303" width="1" height="6" fill="#9e967c" /><rect x="76" y="303" width="1" height="6" fill="#9e967c" /><rect x="96" y="303" width="1" height="6" fill="#9e967c" /><rect x="116" y="301" width="1" height="10" fill="#9e967c" /><rect x="136" y="303" width="1" height="6" fill="#9e967c" /><rect x="156" y="303" width="1" height="6" fill="#9e967c" /><rect x="176" y="303" width="1" height="6" fill="#9e967c" /><rect x="196" y="303" width="1" height="6" fill="#9e967c" /><rect x="216" y="301" width="1" height="10" fill="#9e967c" /><rect x="236" y="303" width="1" height="6" fill="#9e967c" /><rect x="256" y="303" width="1" height="6" fill="#9e967c" /><rect x="276" y="303" width="1" height="6" fill="#9e967c" /><rect x="296" y="303" width="1" height="6" fill="#9e967c" /><rect x="316" y="301" width="1" height="10" fill="#9e967c" /><rect x="336" y="303" width="1" height="6" fill="#9e967c" /><rect x="356" y="303" width="1" height="6" fill="#9e967c" /><rect x="376" y="303" width="1" height="6" fill="#9e967c" /><rect x="396" y="303" width="1" height="6" fill="#9e967c" /><rect x="416" y="301" width="1" height="10" fill="#9e967c" /><rect x="436" y="303" width="1" height="6" fill="#9e967c" /><rect x="456" y="303" width="1" height="6" fill="#9e967c" /><rect x="476" y="303" width="1" height="6" fill="#9e967c" /><rect x="496" y="303" width="1" height="6" fill="#9e967c" /><rect x="516" y="301" width="1" height="10" fill="#9e967c" /><rect x="536" y="303" width="1" height="6" fill="#9e967c" /><rect x="556" y="303" width="1" height="6" fill="#9e967c" /><rect x="576" y="303" width="1" height="6" fill="#9e967c" /><rect x="596" y="303" width="1" height="6" fill="#9e967c" /><rect x="616" y="301" width="1" height="10" fill="#9e967c" /><rect x="636" y="303" width="1" height="6" fill="#9e967c" /><rect x="656" y="303" width="1" height="6" fill="#9e967c" /><rect x="676" y="303" width="1" height="6" fill="#9e967c" /><rect x="696" y="303" width="1" height="6" fill="#9e967c" /><rect x="716" y="301" width="1" height="10" fill="#9e967c" /><rect x="736" y="303" width="1" height="6" fill="#9e967c" /><rect x="756" y="303" width="1" height="6" fill="#9e967c" /><rect x="776" y="303" width="1" height="6" fill="#9e967c" /><rect x="796" y="303" width="1" height="6" fill="#9e967c" /><rect x="816" y="301" width="1" height="10" fill="#9e967c" /><rect x="836" y="303" width="1" height="6" fill="#9e967c" /><rect x="856" y="303" width="1" height="6" fill="#9e967c" /><rect x="876" y="303" width="1" height="6" fill="#9e967c" /><rect x="896" y="303" width="1" height="6" fill="#9e967c" /><rect x="916" y="301" width="1" height="10" fill="#9e967c" /><rect x="936" y="303" width="1" height="6" fill="#9e967c" /><rect x="956" y="303" width="1" height="6" fill="#9e967c" /><rect x="976" y="303" width="1" height="6" fill="#9e967c" /><rect x="996" y="303" width="1" height="6" fill="#9e967c" /><line x1="17" y1="103.5" x2="1016" y2="103.5" stroke="#3c2600" stroke-width="1" stroke-dasharray="7 1" stroke-dashoffset="4"/><line x1="17" y1="102.5" x2="1016" y2="102.5" stroke="#dc8a00" stroke-width="1" stroke-dasharray="7 1" stroke-dashoffset="4"/><rect x="16" y="197" width="1001" height="1" fill="#3c3c00" /><rect x="17" y="198" width="999" height="1" fill="#262600" /><line x1="17" y1="197.5" x2="1016" y2="197.5" stroke="#f0f000" stroke-width="1" stroke-dasharray="3 2"/><rect x="16" y="251" width="1001" height="1" fill="rgba(236,236,0,0.82)" /><rect x="17" y="252" width="999" height="1" fill="rgba(255,255,0,0.26)" /><polyline fill="none" stroke="#ffff00" stroke-width="1.2" shape-rendering="auto" points="518.50,236.00 518.73,236.27 518.95,237.03 519.17,238.16 519.40,239.50 519.62,240.84 519.85,241.97 520.07,242.73 520.30,243.00 520.56,238.85 520.82,227.04 521.09,209.36 521.35,188.50 521.61,167.64 521.88,149.96 522.14,138.15 522.40,134.00 522.66,137.77 522.92,148.50 523.19,164.56 523.45,183.50 523.71,202.44 523.98,218.50 524.24,229.23 524.50,233.00 524.74,230.07 524.98,221.72 525.21,209.23 525.45,194.50 525.69,179.77 525.92,167.28 526.16,158.93 526.40,156.00 526.66,158.65 526.92,166.18 527.19,177.45 527.45,190.75 527.71,204.05 527.98,215.32 528.24,222.85 528.50,225.50 528.75,223.35 529.00,217.23 529.25,208.06 529.50,197.25 529.75,186.44 530.00,177.27 530.25,171.15 530.50,169.00 530.73,170.83 530.95,176.03 531.17,183.82 531.40,193.00 531.62,202.18 531.85,209.97 532.07,215.17 532.30,217.00 532.55,215.33 532.80,210.56 533.05,203.42 533.30,195.00 533.55,186.58 533.80,179.44 534.05,174.67 534.30,173.00 534.56,174.37 534.82,178.27 535.09,184.11 535.35,191.00 535.61,197.89 535.88,203.73 536.14,207.63 536.40,209.00 536.64,207.88 536.88,204.69 537.11,199.93 537.35,194.30 537.59,188.67 537.82,183.91 538.06,180.72 538.30,179.60 538.55,180.63 538.80,183.57 539.05,187.96 539.30,193.15 539.55,198.34 539.80,202.73 540.05,205.67 540.30,206.70 540.54,205.75 540.77,203.04 541.01,198.98 541.25,194.20 541.49,189.42 541.73,185.36 541.96,182.65 542.20,181.70 542.45,182.45 542.70,184.60 542.95,187.81 543.20,191.60 543.45,195.39 543.70,198.60 543.95,200.75 544.20,201.50 544.44,200.93 544.68,199.29 544.91,196.84 545.15,193.95 545.39,191.06 545.62,188.61 545.86,186.97 546.10,186.40 546.35,186.99 546.60,188.68 546.85,191.22 547.10,194.20 547.35,197.18 547.60,199.72 547.85,201.41 548.10,202.00 548.35,201.47 548.60,199.95 548.85,197.68 549.10,195.00 549.35,192.32 549.60,190.05 549.85,188.53 550.10,188.00 550.35,188.49 550.60,189.90 550.85,192.01 551.10,194.50 551.35,196.99 551.60,199.10 551.85,200.51 552.10,201.00 552.35,200.58 552.60,199.39 552.85,197.60 553.10,195.50 553.35,193.40 553.60,191.61 553.85,190.42 554.10,190.00 554.35,190.36 554.60,191.39 554.85,192.93 555.10,194.75 555.35,196.57 555.60,198.11 555.85,199.14 556.10,199.50 556.35,199.20 556.60,198.33 556.85,197.03 557.10,195.50 557.35,193.97 557.60,192.67 557.85,191.80 558.10,191.50 558.35,191.77 558.60,192.53 558.85,193.66 559.10,195.00 559.35,196.34 559.60,197.47 559.85,198.23 560.10,198.50 560.35,198.27 560.60,197.62 560.85,196.65 561.10,195.50 561.35,194.35 561.60,193.38 561.85,192.73 562.10,192.50"/><rect x="518" y="103" width="1" height="9" fill="#ffff00"/><rect x="517" y="111" width="2" height="126" fill="#ffff00"/><polyline fill="none" stroke="#ffff00" stroke-width="1.0" shape-rendering="auto" points="520.00,171.00 520.26,173.07 520.52,178.98 520.79,187.82 521.05,198.25 521.31,208.68 521.58,217.52 521.84,223.43 522.10,225.50 522.36,223.62 522.62,218.25 522.89,210.22 523.15,200.75 523.41,191.28 523.68,183.25 523.94,177.88 524.20,176.00 524.44,177.47 524.68,181.64 524.91,187.88 525.15,195.25 525.39,202.62 525.62,208.86 525.86,213.03 526.10,214.50 526.36,213.18 526.62,209.41 526.89,203.77 527.15,197.12 527.41,190.48 527.68,184.84 527.94,181.07 528.20,179.75 528.45,180.83 528.70,183.89 528.95,188.47 529.20,193.88 529.45,199.28 529.70,203.86 529.95,206.92 530.20,208.00 530.43,207.09 530.65,204.49 530.88,200.59 531.10,196.00 531.33,191.41 531.55,187.51 531.77,184.91 532.00,184.00 532.25,184.84 532.50,187.22 532.75,190.79 533.00,195.00 533.25,199.21 533.50,202.78 533.75,205.16 534.00,206.00 534.26,205.31 534.52,203.36 534.79,200.44 535.05,197.00 535.31,193.56 535.58,190.64 535.84,188.69 536.10,188.00 536.34,188.56 536.58,190.15 536.81,192.54 537.05,195.35 537.29,198.16 537.52,200.55 537.76,202.14 538.00,202.70 538.25,202.18 538.50,200.72 538.75,198.52 539.00,195.93 539.25,193.33 539.50,191.13 539.75,189.67 540.00,189.15 540.24,189.63 540.48,190.98 540.71,193.01 540.95,195.40 541.19,197.79 541.43,199.82 541.66,201.17 541.90,201.65 542.15,201.27 542.40,200.20 542.65,198.59 542.90,196.70 543.15,194.81 543.40,193.20 543.65,192.13 543.90,191.75 544.14,192.04 544.38,192.86 544.61,194.08 544.85,195.52 545.09,196.97 545.33,198.19 545.56,199.01 545.80,199.30 546.05,199.00 546.30,198.16 546.55,196.89 546.80,195.40 547.05,193.91 547.30,192.64 547.55,191.80 547.80,191.50 548.05,191.77 548.30,192.53 548.55,193.66 548.80,195.00 549.05,196.34 549.30,197.47 549.55,198.23 549.80,198.50 550.05,198.25 550.30,197.55 550.55,196.49 550.80,195.25 551.05,194.01 551.30,192.95 551.55,192.25 551.80,192.00 552.05,192.21 552.30,192.81 552.55,193.70 552.80,194.75 553.05,195.80 553.30,196.69 553.55,197.29 553.80,197.50 554.05,197.32 554.30,196.80 554.55,196.03 554.80,195.12 555.05,194.22 555.30,193.45 555.55,192.93"/><path d="M563 195.5V195.5H564V194.5H565V195.5H566V194.5H567V193.5H568V197.5H569V195.5H570V197.5H571V195.5H572V192.5H573V198.5H574V196.5H575V196.5H576V196.5H577V197.5H578V195.5H579V196.5H580V194.5H581V195.5H582V198.5H583V200.5H584V198.5H585V195.5H586V193.5H587V196.5H588V197.5H589V199.5H590V194.5H591V197.5H592V196.5H593V197.5H594V194.5H595V199.5H596V197.5H597V198.5H598V195.5H599V200.5H600V194.5H601V196.5H602V198.5H603V197.5H604V199.5H605V197.5H606V194.5H607V195.5H608V193.5H609V200.5H610V198.5H611V197.5H612V197.5H613V200.5H614V199.5H615V197.5H616V198.5H617V193.5H618V196.5H619V196.5H620V196.5H621V195.5H622V196.5H623V197.5H624V192.5H625V198.5H626V198.5H627V197.5H628V195.5H629V200.5H630V196.5H631V194.5H632V196.5H633V197.5H634V194.5H635V200.5H636V196.5H637V199.5H638V194.5H639V200.5H640V197.5H641V195.5H642V199.5H643V195.5H644V195.5H645V199.5H646V195.5H647V199.5H648V192.5H649V197.5H650V195.5H651V195.5H652V197.5H653V195.5H654V200.5H655V193.5H656V197.5H657V194.5H658V199.5H659V195.5H660V197.5H661V197.5H662V199.5H663V195.5H664V196.5H665V198.5H666V194.5H667V197.5H668V192.5H669V192.5H670V193.5H671V195.5H672V197.5H673V197.5H674V194.5H675V193.5H676V192.5H677V197.5H678V193.5H679V198.5H680V197.5H681V196.5H682V195.5H683V195.5H684V195.5H685V193.5H686V196.5H687V196.5H688V199.5H689V197.5H690V192.5H691V199.5H692V200.5H693V193.5H694V194.5H695V193.5H696V195.5H697V197.5H698V194.5H699V197.5H700V198.5H701V192.5H702V192.5H703V196.5H704V195.5H705V194.5H706V192.5H707V195.5H708V198.5H709V198.5H710V195.5H711V197.5H712V193.5H713V193.5H714V198.5H715V194.5H716V198.5H717V196.5H718V193.5H719V199.5H720V196.5H721V193.5H722V192.5H723V198.5H724V196.5H725V197.5H726V200.5H727V195.5H728V194.5H729V192.5H730V198.5H731V194.5H732V197.5H733V194.5H734V196.5H735V192.5H736V196.5H737V196.5H738V196.5H739V199.5H740V198.5H741V194.5H742V196.5H743V194.5H744V195.5H745V197.5H746V196.5H747V195.5H748V197.5H749V200.5H750V199.5H751V194.5H752V195.5H753V193.5H754V196.5H755V196.5H756V195.5H757V196.5H758V195.5H759V192.5H760V196.5H761V195.5H762V192.5H763V198.5H764V198.5H765V199.5H766V195.5H767V195.5H768V197.5H769V193.5H770V196.5H771V194.5H772V197.5H773V199.5H774V197.5H775V196.5H776V197.5H777V196.5H778V199.5H779V196.5H780V196.5H781V197.5H782V196.5H783V195.5H784V195.5H785V195.5H786V195.5H787V197.5H788V195.5H789V196.5H790V198.5H791V200.5H792V196.5H793V197.5H794V193.5H795V192.5H796V193.5H797V195.5H798V196.5H799V200.5H800V192.5H801V195.5H802V194.5H803V194.5H804V192.5H805V194.5H806V200.5H807V195.5H808V193.5H809V193.5H810V197.5H811V198.5H812V196.5H813V193.5H814V196.5H815V197.5H816V195.5H817V195.5H818V194.5H819V198.5H820V196.5H821V198.5H822V193.5H823V194.5H824V192.5H825V195.5H826V200.5H827V200.5H828V196.5H829V195.5H830V196.5H831V193.5H832V197.5H833V199.5H834V197.5H835V195.5H836V197.5H837V198.5H838V195.5H839V198.5H840V197.5H841V196.5H842V192.5H843V193.5H844V197.5H845V195.5H846V195.5H847V199.5H848V193.5H849V196.5H850V200.5H851V196.5H852V197.5H853V198.5H854V197.5H855V201.5H856V201.5H857V194.5H858V195.5H859V201.5H860V196.5H861V198.5H862V196.5H863V198.5H864V198.5H865V197.5H866V196.5H867V199.5H868V197.5H869V198.5H870V199.5H871V201.5H872V196.5H873V197.5H874V195.5H875V198.5H876V197.5H877V201.5H878V196.5H879V198.5H880V201.5H881V197.5H882V197.5H883V197.5H884V199.5H885V198.5H886V193.5H887V198.5H888V199.5H889V201.5H890V198.5H891V201.5H892V194.5H893V194.5H894V196.5H895V201.5H896V196.5H897V197.5H898V196.5H899V198.5H900V200.5H901V199.5H902V195.5H903V197.5H904V196.5H905V196.5H906V193.5H907V197.5H908V200.5H909V194.5H910V196.5H911V195.5H912V200.5H913V197.5H914V199.5H915V197.5H916V198.5H917V196.5H918V199.5H919V199.5H920V197.5H921V193.5H922V197.5H923V196.5H924V197.5H925V197.5H926V198.5H927V196.5H928V195.5H929V194.5H930V193.5H931V197.5H932V195.5H933V198.5H934V200.5H935V193.5H936V200.5H937V198.5H938V198.5H939V200.5H940V195.5H941V197.5H942V198.5H943V193.5H944V196.5H945V198.5H946V201.5H947V198.5H948V198.5H949V197.5H950V201.5H951V198.5H952V198.5H953V196.5H954V195.5H955V196.5H956V200.5H957V198.5H958V193.5H959V197.5H960V200.5H961V196.5H962V197.5H963V198.5H964V201.5H965V201.5H966V194.5H967V194.5H968V197.5H969V194.5H970V198.5H971V201.5H972V195.5H973V199.5H974V194.5H975V195.5H976V198.5H977V198.5H978V193.5H979V196.5H980V198.5H981V199.5H982V197.5H983V196.5H984V193.5H985V200.5H986V197.5H987V198.5H988V197.5H989V197.5H990V197.5H991V199.5H992V197.5H993V196.5H994V195.5H995V195.5H996V198.5H997V194.5H998V200.5H999V197.5H1000V196.5H1001V197.5H1002V200.5H1003V196.5H1004V198.5H1005V193.5H1006V197.5H1007V197.5H1008V195.5H1009V197.5H1010V197.5H1011V200.5H1012V198.5H1013V197.5H1014V196.5H1015V201.5H1016" fill="none" stroke="#ffff00" stroke-width="1" shape-rendering="crispEdges"/><path d="M563 195.5V195.5H564V195.5H565V194.5H566V198.5H567V198.5H568V199.5H569V195.5H570V196.5H571V195.5H572V197.5H573V198.5H574V195.5H575V200.5H576V200.5H577V195.5H578V196.5H579V196.5H580V195.5H581V198.5H582V196.5H583V195.5H584V196.5H585V196.5H586V192.5H587V196.5H588V195.5H589V200.5H590V197.5H591V196.5H592V195.5H593V195.5H594V195.5H595V194.5H596V196.5H597V195.5H598V196.5H599V195.5H600V197.5H601V197.5H602V197.5H603V197.5H604V198.5H605V196.5H606V197.5H607V195.5H608V198.5H609V197.5H610V198.5H611V198.5H612V195.5H613V197.5H614V197.5H615V195.5H616V196.5H617V196.5H618V194.5H619V197.5H620V195.5H621V195.5H622V192.5H623V197.5H624V196.5H625V195.5H626V196.5H627V197.5H628V196.5H629V200.5H630V197.5H631V196.5H632V195.5H633V195.5H634V197.5H635V196.5H636V198.5H637V196.5H638V195.5H639V197.5H640V200.5H641V194.5H642V197.5H643V197.5H644V196.5H645V197.5H646V195.5H647V196.5H648V194.5H649V196.5H650V196.5H651V194.5H652V196.5H653V198.5H654V196.5H655V195.5H656V195.5H657V195.5H658V197.5H659V196.5H660V197.5H661V195.5H662V197.5H663V195.5H664V193.5H665V198.5H666V196.5H667V197.5H668V196.5H669V192.5H670V197.5H671V198.5H672V198.5H673V195.5H674V195.5H675V196.5H676V195.5H677V196.5H678V196.5H679V197.5H680V195.5H681V195.5H682V195.5H683V200.5H684V194.5H685V197.5H686V198.5H687V197.5H688V195.5H689V195.5H690V196.5H691V197.5H692V198.5H693V197.5H694V196.5H695V195.5H696V196.5H697V195.5H698V199.5H699V197.5H700V196.5H701V197.5H702V195.5H703V198.5H704V193.5H705V197.5H706V198.5H707V194.5H708V195.5H709V195.5H710V196.5H711V196.5H712V194.5H713V195.5H714V194.5H715V196.5H716V195.5H717V198.5H718V196.5H719V195.5H720V195.5H721V197.5H722V196.5H723V196.5H724V196.5H725V195.5H726V196.5H727V196.5H728V200.5H729V194.5H730V194.5H731V195.5H732V195.5H733V196.5H734V194.5H735V197.5H736V195.5H737V196.5H738V194.5H739V197.5H740V196.5H741V199.5H742V199.5H743V195.5H744V196.5H745V193.5H746V195.5H747V192.5H748V195.5H749V197.5H750V197.5H751V194.5H752V195.5H753V196.5H754V196.5H755V196.5H756V193.5H757V195.5H758V196.5H759V197.5H760V197.5H761V197.5H762V197.5H763V195.5H764V196.5H765V196.5H766V196.5H767V195.5H768V197.5H769V196.5H770V199.5H771V192.5H772V195.5H773V196.5H774V199.5H775V198.5H776V195.5H777V194.5H778V197.5H779V195.5H780V197.5H781V197.5H782V196.5H783V197.5H784V196.5H785V200.5H786V198.5H787V195.5H788V194.5H789V196.5H790V195.5H791V195.5H792V195.5H793V197.5H794V195.5H795V198.5H796V196.5H797V197.5H798V198.5H799V194.5H800V196.5H801V196.5H802V195.5H803V198.5H804V197.5H805V196.5H806V197.5H807V198.5H808V196.5H809V195.5H810V197.5H811V197.5H812V197.5H813V195.5H814V197.5H815V197.5H816V194.5H817V197.5H818V193.5H819V200.5H820V196.5H821V195.5H822V195.5H823V196.5H824V195.5H825V197.5H826V196.5H827V195.5H828V198.5H829V196.5H830V197.5H831V198.5H832V198.5H833V196.5H834V196.5H835V197.5H836V195.5H837V197.5H838V196.5H839V194.5H840V196.5H841V195.5H842V196.5H843V194.5H844V195.5H845V199.5H846V196.5H847V196.5H848V198.5H849V197.5H850V198.5H851V196.5H852V195.5H853V198.5H854V197.5H855V198.5H856V195.5H857V198.5H858V197.5H859V196.5H860V197.5H861V196.5H862V196.5H863V197.5H864V198.5H865V199.5H866V198.5H867V193.5H868V197.5H869V195.5H870V196.5H871V198.5H872V195.5H873V198.5H874V196.5H875V198.5H876V198.5H877V197.5H878V197.5H879V197.5H880V196.5H881V198.5H882V198.5H883V197.5H884V198.5H885V201.5H886V198.5H887V197.5H888V196.5H889V195.5H890V198.5H891V196.5H892V196.5H893V197.5H894V199.5H895V195.5H896V199.5H897V195.5H898V198.5H899V196.5H900V197.5H901V199.5H902V195.5H903V197.5H904V198.5H905V196.5H906V197.5H907V196.5H908V196.5H909V199.5H910V199.5H911V196.5H912V196.5H913V198.5H914V196.5H915V196.5H916V195.5H917V196.5H918V195.5H919V193.5H920V196.5H921V196.5H922V197.5H923V197.5H924V200.5H925V196.5H926V195.5H927V198.5H928V197.5H929V193.5H930V195.5H931V196.5H932V197.5H933V196.5H934V201.5H935V198.5H936V198.5H937V197.5H938V196.5H939V197.5H940V199.5H941V198.5H942V200.5H943V196.5H944V198.5H945V195.5H946V198.5H947V196.5H948V198.5H949V196.5H950V198.5H951V198.5H952V198.5H953V196.5H954V197.5H955V196.5H956V198.5H957V196.5H958V198.5H959V196.5H960V196.5H961V196.5H962V199.5H963V198.5H964V195.5H965V199.5H966V197.5H967V196.5H968V197.5H969V198.5H970V197.5H971V197.5H972V197.5H973V197.5H974V197.5H975V198.5H976V196.5H977V198.5H978V196.5H979V196.5H980V196.5H981V197.5H982V201.5H983V196.5H984V197.5H985V198.5H986V196.5H987V196.5H988V197.5H989V196.5H990V197.5H991V199.5H992V196.5H993V199.5H994V193.5H995V197.5H996V199.5H997V197.5H998V197.5H999V194.5H1000V197.5H1001V193.5H1002V193.5H1003V195.5H1004V198.5H1005V197.5H1006V196.5H1007V200.5H1008V199.5H1009V195.5H1010V197.5H1011V196.5H1012V198.5H1013V197.5H1014V195.5H1015V197.5H1016" fill="none" stroke="#ffff00" stroke-width="1" shape-rendering="crispEdges"/><polyline fill="none" stroke="#ffff00" stroke-width="1.1" shape-rendering="auto" points="556.00,189.78 557.74,197.92 559.35,190.97 561.41,197.33 564.08,190.87 566.97,196.27 568.50,193.17 571.46,196.01 573.31,193.33 575.36,195.93 577.96,193.41 580.14,196.54 582.30,193.58 584.43,195.68 585.96,193.09 587.91,196.27 589.80,193.77 591.98,195.87 593.71,193.33 596.16,196.15 599.05,193.34"/><path d="M20 466.5V466.5H21V471.5H22V463.5H23V461.5H24V467.5H25V461.5H26V467.5H27V465.5H28V466.5H29V467.5H30V466.5H31V467.5H32V467.5H33V466.5H34V466.5H35V466.5H36V465.5H37V465.5H38V471.5H39V465.5H40V466.5H41V466.5H42V467.5H43V464.5H44V466.5H45V467.5H46V467.5H47V471.5H48V466.5H49V466.5H50V466.5H51V465.5H52V467.5H53V461.5H54V466.5H55V467.5H56V468.5H57V465.5H58V465.5H59V471.5H60V465.5H61V466.5H62V465.5H63V466.5H64V466.5H65V465.5H66V466.5H67V467.5H68V467.5H69V465.5H70V464.5H71V467.5H72V466.5H73V465.5H74V466.5H75V466.5H76V463.5H77V467.5H78V465.5H79V461.5H80V471.5H81V465.5H82V465.5H83V467.5H84V466.5H85V467.5H86V464.5H87V466.5H88V469.5H89V467.5H90V465.5H91V466.5H92V467.5H93V465.5H94V467.5H95V471.5H96V465.5H97V466.5H98V469.5H99V465.5H100V466.5H101V465.5H102V465.5H103V466.5H104V466.5H105V466.5H106V466.5H107V466.5H108V471.5H109V466.5H110V465.5H111V467.5H112V465.5H113V466.5H114V466.5H115V466.5H116V467.5H117V464.5H118V466.5H119V467.5H120V471.5H121V466.5H122V466.5H123V466.5H124V466.5H125V463.5H126V465.5H127V465.5H128V466.5H129V465.5H130V467.5H131V465.5H132V466.5H133V466.5H134V466.5H135V466.5H136V464.5H137V468.5H138V466.5H139V465.5H140V465.5H141V466.5H142V466.5H143V461.5H144V467.5H145V466.5H146V467.5H147V467.5H148V465.5H149V468.5H150V466.5H151V466.5H152V468.5H153V466.5H154V466.5H155V466.5H156V463.5H157V461.5H158V466.5H159V467.5H160V466.5H161V467.5H162V467.5H163V466.5H164V466.5H165V465.5H166V466.5H167V466.5H168V466.5H169V471.5H170V467.5H171V467.5H172V465.5H173V466.5H174V465.5H175V465.5H176V466.5H177V467.5H178V466.5H179V465.5H180V466.5H181V465.5H182V465.5H183V465.5H184V465.5H185V467.5H186V464.5H187V471.5H188V464.5H189V466.5H190V466.5H191V463.5H192V467.5H193V466.5H194V465.5H195V465.5H196V467.5H197V468.5H198V464.5H199V466.5H200V466.5H201V466.5H202V465.5H203V464.5H204V467.5H205V465.5H206V467.5H207V465.5H208V466.5H209V465.5H210V466.5H211V467.5H212V466.5H213V471.5H214V461.5H215V467.5H216V466.5H217V467.5H218V471.5H219V466.5H220V466.5H221V466.5H222V466.5H223V466.5H224V467.5H225V465.5H226V471.5H227V467.5H228V467.5H229V466.5H230V467.5H231V465.5H232V466.5H233V466.5H234V466.5H235V466.5H236V467.5H237V465.5H238V466.5H239V467.5H240V466.5H241V467.5H242V466.5H243V465.5H244V469.5H245V467.5H246V466.5H247V467.5H248V466.5H249V465.5H250V465.5H251V466.5H252V468.5H253V466.5H254V467.5H255V465.5H256V465.5H257V465.5H258V466.5H259V467.5H260V466.5H261V466.5H262V467.5H263V467.5H264V468.5H265V465.5H266V463.5H267V466.5H268V461.5H269V467.5H270V467.5H271V465.5H272V465.5H273V466.5H274V464.5H275V466.5H276V466.5H277V465.5H278V466.5H279V466.5H280V466.5H281V469.5H282V461.5H283V467.5H284V461.5H285V461.5H286V466.5H287V466.5H288V464.5H289V467.5H290V463.5H291V465.5H292V467.5H293V466.5H294V467.5H295V466.5H296V466.5H297V466.5H298V466.5H299V466.5H300V463.5H301V466.5H302V463.5H303V467.5H304V466.5H305V467.5H306V466.5H307V464.5H308V467.5H309V466.5H310V466.5H311V463.5H312V466.5H313V465.5H314V466.5H315V466.5H316V467.5H317V468.5H318V464.5H319V465.5H320V466.5H321V466.5H322V465.5H323V468.5H324V463.5H325V467.5H326V466.5H327V465.5H328V467.5H329V471.5H330V466.5H331V469.5H332V467.5H333V471.5H334V466.5H335V465.5H336V466.5H337V465.5H338V465.5H339V467.5H340V467.5H341V466.5H342V466.5H343V467.5H344V466.5H345V466.5H346V466.5H347V467.5H348V465.5H349V467.5H350V463.5H351V467.5H352V467.5H353V465.5H354V466.5H355V467.5H356V467.5H357V465.5H358V468.5H359V466.5H360V467.5H361V465.5H362V467.5H363V461.5H364V466.5H365V463.5H366V465.5H367V466.5H368V467.5H369V466.5H370V467.5H371V463.5H372V461.5H373V464.5H374V467.5H375V466.5H376V467.5H377V471.5H378V466.5H379V466.5H380V465.5H381V465.5H382V467.5H383V466.5H384V466.5H385V467.5H386V466.5H387V467.5H388V466.5H389V466.5H390V465.5H391V466.5H392V466.5H393V466.5H394V465.5H395V466.5H396V465.5H397V464.5H398V464.5H399V465.5H400V461.5H401V465.5H402V467.5H403V466.5H404V465.5H405V465.5H406V465.5H407V465.5H408V465.5H409V465.5H410V468.5H411V461.5H412V466.5H413V466.5H414V466.5H415V464.5H416V464.5H417V466.5H418V464.5H419V467.5H420V466.5H421V464.5H422V466.5H423V466.5H424V465.5H425V468.5H426V465.5H427V465.5H428V465.5H429V466.5H430V471.5H431V467.5H432V466.5H433V461.5H434V466.5H435V467.5H436V461.5H437V467.5H438V465.5H439V467.5H440V465.5H441V466.5H442V466.5H443V465.5H444V466.5H445V467.5H446V467.5H447V469.5H448V467.5H449V465.5H450V465.5H451V466.5H452V466.5H453V466.5H454V466.5H455V461.5H456V461.5H457V471.5H458V465.5H459V466.5H460V465.5H461V463.5H462V466.5H463V469.5H464V465.5H465V467.5H466V466.5H467V467.5H468V466.5H469V467.5H470V466.5H471V467.5H472V467.5H473V466.5H474V461.5H475V466.5H476V466.5H477V466.5H478V465.5H479" fill="none" stroke="#ffff00" stroke-width="1" shape-rendering="crispEdges"/><path d="M20 466.5V466.5H21V467.5H22V467.5H23V464.5H24V467.5H25V469.5H26V461.5H27V467.5H28V465.5H29V467.5H30V466.5H31V461.5H32V465.5H33V461.5H34V466.5H35V464.5H36V465.5H37V465.5H38V466.5H39V461.5H40V467.5H41V466.5H42V467.5H43V464.5H44V466.5H45V468.5H46V467.5H47V461.5H48V469.5H49V466.5H50V465.5H51V466.5H52V465.5H53V466.5H54V466.5H55V466.5H56V466.5H57V468.5H58V467.5H59V467.5H60V466.5H61V466.5H62V465.5H63V465.5H64V466.5H65V466.5H66V465.5H67V463.5H68V466.5H69V466.5H70V466.5H71V465.5H72V463.5H73V466.5H74V465.5H75V467.5H76V466.5H77V471.5H78V466.5H79V464.5H80V465.5H81V467.5H82V466.5H83V467.5H84V467.5H85V463.5H86V465.5H87V467.5H88V466.5H89V467.5H90V466.5H91V471.5H92V466.5H93V466.5H94V463.5H95V467.5H96V465.5H97V466.5H98V467.5H99V465.5H100V463.5H101V467.5H102V467.5H103V466.5H104V469.5H105V465.5H106V465.5H107V466.5H108V466.5H109V466.5H110V467.5H111V466.5H112V467.5H113V461.5H114V466.5H115V464.5H116V466.5H117V465.5H118V464.5H119V469.5H120V465.5H121V467.5H122V471.5H123V466.5H124V466.5H125V465.5H126V467.5H127V461.5H128V466.5H129V465.5H130V467.5H131V464.5H132V465.5H133V463.5H134V467.5H135V467.5H136V466.5H137V467.5H138V466.5H139V466.5H140V466.5H141V467.5H142V471.5H143V468.5H144V464.5H145V466.5H146V467.5H147V463.5H148V465.5H149V464.5H150V461.5H151V466.5H152V467.5H153V466.5H154V465.5H155V467.5H156V467.5H157V467.5H158V465.5H159V466.5H160V466.5H161V466.5H162V469.5H163V467.5H164V467.5H165V467.5H166V466.5H167V466.5H168V466.5H169V465.5H170V466.5H171V468.5H172V465.5H173V466.5H174V468.5H175V466.5H176V468.5H177V466.5H178V466.5H179V465.5H180V466.5H181V461.5H182V467.5H183V465.5H184V465.5H185V466.5H186V466.5H187V466.5H188V467.5H189V466.5H190V466.5H191V466.5H192V466.5H193V469.5H194V467.5H195V467.5H196V465.5H197V466.5H198V466.5H199V471.5H200V465.5H201V467.5H202V471.5H203V466.5H204V467.5H205V465.5H206V463.5H207V469.5H208V466.5H209V465.5H210V467.5H211V467.5H212V465.5H213V467.5H214V471.5H215V467.5H216V465.5H217V467.5H218V465.5H219V466.5H220V465.5H221V469.5H222V467.5H223V464.5H224V465.5H225V465.5H226V465.5H227V465.5H228V465.5H229V465.5H230V468.5H231V471.5H232V465.5H233V461.5H234V463.5H235V466.5H236V465.5H237V466.5H238V465.5H239V466.5H240V466.5H241V467.5H242V466.5H243V467.5H244V467.5H245V466.5H246V466.5H247V471.5H248V465.5H249V466.5H250V465.5H251V464.5H252V467.5H253V469.5H254V466.5H255V467.5H256V466.5H257V468.5H258V467.5H259V466.5H260V467.5H261V464.5H262V465.5H263V468.5H264V466.5H265V466.5H266V465.5H267V466.5H268V467.5H269V465.5H270V471.5H271V466.5H272V468.5H273V466.5H274V463.5H275V467.5H276V466.5H277V469.5H278V465.5H279V466.5H280V466.5H281V466.5H282V465.5H283V466.5H284V466.5H285V465.5H286V466.5H287V468.5H288V467.5H289V466.5H290V466.5H291V461.5H292V466.5H293V467.5H294V461.5H295V466.5H296V461.5H297V467.5H298V466.5H299V466.5H300V465.5H301V469.5H302V466.5H303V465.5H304V466.5H305V466.5H306V466.5H307V466.5H308V468.5H309V465.5H310V468.5H311V465.5H312V465.5H313V466.5H314V466.5H315V466.5H316V465.5H317V467.5H318V466.5H319V466.5H320V467.5H321V465.5H322V466.5H323V465.5H324V466.5H325V469.5H326V466.5H327V463.5H328V465.5H329V461.5H330V465.5H331V466.5H332V466.5H333V466.5H334V466.5H335V471.5H336V465.5H337V465.5H338V466.5H339V465.5H340V464.5H341V465.5H342V466.5H343V467.5H344V467.5H345V466.5H346V467.5H347V464.5H348V466.5H349V466.5H350V466.5H351V465.5H352V466.5H353V465.5H354V471.5H355V466.5H356V461.5H357V465.5H358V468.5H359V466.5H360V467.5H361V467.5H362V466.5H363V471.5H364V465.5H365V466.5H366V464.5H367V466.5H368V465.5H369V467.5H370V467.5H371V465.5H372V467.5H373V467.5H374V468.5H375V463.5H376V466.5H377V467.5H378V464.5H379V465.5H380V471.5H381V466.5H382V466.5H383V465.5H384V467.5H385V466.5H386V466.5H387V467.5H388V466.5H389V465.5H390V466.5H391V466.5H392V469.5H393V466.5H394V471.5H395V466.5H396V463.5H397V465.5H398V465.5H399V466.5H400V466.5H401V466.5H402V464.5H403V471.5H404V466.5H405V465.5H406V466.5H407V466.5H408V467.5H409V461.5H410V471.5H411V465.5H412V465.5H413V467.5H414V466.5H415V468.5H416V466.5H417V465.5H418V469.5H419V465.5H420V463.5H421V467.5H422V466.5H423V465.5H424V467.5H425V467.5H426V466.5H427V466.5H428V467.5H429V467.5H430V463.5H431V465.5H432V466.5H433V465.5H434V467.5H435V467.5H436V463.5H437V467.5H438V466.5H439V471.5H440V466.5H441V466.5H442V467.5H443V466.5H444V471.5H445V467.5H446V466.5H447V466.5H448V468.5H449V467.5H450V467.5H451V467.5H452V466.5H453V464.5H454V465.5H455V466.5H456V466.5H457V466.5H458V461.5H459V468.5H460V464.5H461V463.5H462V465.5H463V468.5H464V467.5H465V467.5H466V467.5H467V463.5H468V467.5H469V466.5H470V466.5H471V467.5H472V465.5H473V465.5H474V467.5H475V466.5H476V465.5H477V466.5H478V466.5H479" fill="none" stroke="#ffff00" stroke-width="1" shape-rendering="crispEdges"/><path d="M479 476.5V476.5H480V468.5H481V472.5H482V471.5H483V472.5H484V471.5H485V471.5H486V470.5H487V470.5H488V471.5H489V472.5H490V471.5H491V470.5H492V466.5H493V472.5H494V471.5H495V471.5H496V468.5H497V471.5H498V470.5H499V471.5H500V471.5H501V470.5H502V474.5H503V469.5H504V472.5H505V470.5H506V472.5H507V471.5H508V472.5H509V472.5H510V472.5H511V471.5H512" fill="none" stroke="#ffff00" stroke-width="1" shape-rendering="crispEdges"/><path d="M479 471.5V471.5H480V471.5H481V470.5H482V471.5H483V470.5H484V470.5H485V471.5H486V469.5H487V466.5H488V471.5H489V471.5H490V471.5H491V471.5H492V474.5H493V471.5H494V472.5H495V476.5H496V472.5H497V471.5H498V472.5H499V470.5H500V474.5H501V471.5H502V472.5H503V471.5H504V470.5H505V468.5H506V473.5H507V473.5H508V472.5H509V470.5H510V472.5H511V470.5H512" fill="none" stroke="#ffff00" stroke-width="1" shape-rendering="crispEdges"/><polyline fill="none" stroke="#ffff00" stroke-width="1.4" shape-rendering="auto" points="511.5,468.0 512.4,440.5 513.6,403.0 514.7,347.0 516.0,318.0"/><rect x="516" y="36" width="1" height="539" fill="#9e967c" /><rect x="513" y="46" width="7" height="1" fill="#9e967c" /><rect x="513" y="57" width="7" height="1" fill="#9e967c" /><rect x="513" y="68" width="7" height="1" fill="#9e967c" /><rect x="513" y="79" width="7" height="1" fill="#9e967c" /><rect x="511" y="89" width="11" height="1" fill="#9e967c" /><rect x="513" y="100" width="7" height="1" fill="#9e967c" /><rect x="513" y="111" width="7" height="1" fill="#9e967c" /><rect x="513" y="122" width="7" height="1" fill="#9e967c" /><rect x="513" y="133" width="7" height="1" fill="#9e967c" /><rect x="511" y="143" width="11" height="1" fill="#9e967c" /><rect x="513" y="154" width="7" height="1" fill="#9e967c" /><rect x="513" y="165" width="7" height="1" fill="#9e967c" /><rect x="513" y="176" width="7" height="1" fill="#9e967c" /><rect x="513" y="187" width="7" height="1" fill="#9e967c" /><rect x="511" y="197" width="11" height="1" fill="#9e967c" /><rect x="513" y="208" width="7" height="1" fill="#9e967c" /><rect x="513" y="219" width="7" height="1" fill="#9e967c" /><rect x="513" y="230" width="7" height="1" fill="#9e967c" /><rect x="513" y="241" width="7" height="1" fill="#9e967c" /><rect x="511" y="251" width="11" height="1" fill="#9e967c" /><rect x="513" y="262" width="7" height="1" fill="#9e967c" /><rect x="513" y="273" width="7" height="1" fill="#9e967c" /><rect x="513" y="284" width="7" height="1" fill="#9e967c" /><rect x="513" y="295" width="7" height="1" fill="#9e967c" /><rect x="511" y="305" width="11" height="1" fill="#9e967c" /><rect x="513" y="316" width="7" height="1" fill="#9e967c" /><rect x="513" y="327" width="7" height="1" fill="#9e967c" /><rect x="513" y="338" width="7" height="1" fill="#9e967c" /><rect x="513" y="349" width="7" height="1" fill="#9e967c" /><rect x="511" y="359" width="11" height="1" fill="#9e967c" /><rect x="513" y="370" width="7" height="1" fill="#9e967c" /><rect x="513" y="381" width="7" height="1" fill="#9e967c" /><rect x="513" y="392" width="7" height="1" fill="#9e967c" /><rect x="513" y="403" width="7" height="1" fill="#9e967c" /><rect x="511" y="413" width="11" height="1" fill="#9e967c" /><rect x="513" y="424" width="7" height="1" fill="#9e967c" /><rect x="513" y="435" width="7" height="1" fill="#9e967c" /><rect x="513" y="446" width="7" height="1" fill="#9e967c" /><rect x="513" y="457" width="7" height="1" fill="#9e967c" /><rect x="511" y="467" width="11" height="1" fill="#9e967c" /><rect x="513" y="478" width="7" height="1" fill="#9e967c" /><rect x="513" y="489" width="7" height="1" fill="#9e967c" /><rect x="513" y="500" width="7" height="1" fill="#9e967c" /><rect x="513" y="511" width="7" height="1" fill="#9e967c" /><rect x="511" y="521" width="11" height="1" fill="#9e967c" /><rect x="513" y="532" width="7" height="1" fill="#9e967c" /><rect x="513" y="543" width="7" height="1" fill="#9e967c" /><rect x="513" y="554" width="7" height="1" fill="#9e967c" /><rect x="513" y="565" width="7" height="1" fill="#9e967c" /><polygon points="510.6,35.8 521.4,35.8 516,46" fill="#ffa400" shape-rendering="auto"/><polygon points="512.8,91.8 525.2,91.8 519,103.5" fill="#ffa400" shape-rendering="auto"/><polygon points="995.3,325.5 1004.3,320 1004.3,331" fill="#ffff00" shape-rendering="auto"/><rect x="1004" y="325" width="13" height="1" fill="#ffff00" /><rect x="1017" y="325" width="2" height="1" fill="rgba(255,255,0,0.6)" /><rect x="17" y="466" width="4" height="2" fill="#ffff00" /><circle cx="10.2" cy="467.6" r="8.4" fill="#ffff00" stroke="#ff9800" stroke-width="2" shape-rendering="auto"/><path d="M8.3 465.6 L10.9 463.3 L10.9 471.9" fill="none" stroke="#141400" stroke-width="1.7" shape-rendering="auto"/></svg>
<div class="abs" style="left:108.4px;top:342px;font-size:12.5px;line-height:14px;color:#f0f000;transform:scaleX(0.78);transform-origin:0 0">SW</div>
<div class="panel"></div>
<div class="box" style="left:21px;top:584px;width:281px;height:24px"></div>
<div class="pill" style="left:29.5px;top:591.3px;width:33px;height:13.5px"><i style="line-height:10.0px;font-size:9px">C1</i></div>
<div class="t" style="left:67px;top:591px">20.0V/div</div>
<div class="t" style="left:183px;top:591px">1M&Omega;</div>
<div class="t" style="left:215px;top:587px;font-size:9px">B</div>
<div class="t" style="left:223px;top:587px;font-size:8px;font-weight:normal">/</div>
<div class="t" style="left:220px;top:595px;font-size:11px;letter-spacing:0;transform:scaleX(0.9);transform-origin:0 0">W</div>
<div class="t" style="left:230px;top:591px;letter-spacing:0.1px">:500M</div>

<div class="box" style="left:306px;top:584px;width:136px;height:70px"></div>
<div class="abs" style="left:352px;top:590px;width:86px;height:64px;border:1px solid #d0d0d0;border-bottom:none"></div>
<div class="abs" style="left:352px;top:611px;width:86px;height:1px;background:#d0d0d0"></div>
<div class="abs" style="left:352px;top:632px;width:86px;height:1px;background:#d0d0d0"></div>
<div class="pill" style="left:314px;top:592.4px;width:36px;height:14.2px"><i style="line-height:10.7px;font-size:9px">V1</i></div>
<div class="pill" style="left:314px;top:613.4px;width:36px;height:14.2px"><i style="line-height:10.7px;font-size:9px">V2</i></div>
<div class="pill" style="left:314px;top:634.2px;width:36px;height:14.2px"><i style="line-height:10.7px;font-size:9px">&Delta;V</i></div>
<div class="t" style="left:354px;top:593px">80.0V</div>
<div class="t" style="left:354px;top:614px">100V</div>
<div class="t" style="left:354px;top:635px">20.0V</div>

<div class="box" style="left:591px;top:584px;width:186px;height:26px"></div>
<div class="abs" style="left:597px;top:591px;width:16px;height:15px;background:#c8c8d0;border:1px solid #ff9000;color:#111;font-weight:bold;font-size:11px;line-height:13px;text-align:center">A'</div>
<div class="pill" style="left:614.5px;top:591.5px;width:33px;height:13.5px"><i style="line-height:10.0px;font-size:9px">C1</i></div>
<svg class="abs" style="left:648px;top:588px" width="20" height="20"><polyline points="3,15.5 8,15.5 13,4.5 17,4.5" fill="none" stroke="#fff" stroke-width="2"/></svg>
<div class="t" style="left:668px;top:591px">52.8V</div>

<div class="box" style="left:781px;top:585px;width:231px;height:92px"></div>
<div class="t" style="left:789px;top:591px">100ns/div</div>
<div class="t" style="left:854px;top:591px">10.0GS/s</div>
<div class="t" style="left:939px;top:591px">100ps/pt</div>
<div class="t" style="left:789px;top:612px;color:#00e000">Run</div>
<div class="t" style="left:874px;top:612px">Sample</div>
<div class="abs" style="left:993px;top:611px;width:3.6px;height:14px;background:#f8f830;border-radius:1.5px"></div>
<div class="abs" style="left:991.3px;top:622px;width:7px;height:7px;background:#f8f830;border-radius:50%"></div>
<div class="t" style="left:789px;top:633px">453 acqs</div>
<div class="t" style="left:929px;top:633px">RL:10.0k</div>
<div class="t" style="left:789px;top:654px">Auto</div>
<div class="t" style="left:831px;top:654px">April 29, 2025</div>
<div class="t" style="left:957px;top:654px;color:#f09000">18:20:18</div>

<div class="box" style="left:21px;top:686px;width:566px;height:66px"></div>
<div class="t" style="left:146px;top:695px">Value</div>
<div class="t" style="left:221px;top:695px">Mean</div>
<div class="t" style="left:301px;top:695px">Min</div>
<div class="t" style="left:370px;top:695px">Max</div>
<div class="t" style="left:433px;top:695px">St Dev</div>
<div class="t" style="left:499px;top:695px">Count</div>
<div class="t" style="left:554px;top:695px">Info</div>
<div class="pill" style="left:29.5px;top:713.4px;width:33px;height:13.5px"><i style="line-height:10.0px;font-size:9px">C1</i></div>
<div class="pill" style="left:29.5px;top:732.8px;width:33px;height:13.8px"><i style="line-height:10.3px;font-size:9px">C1</i></div>
<div class="t" style="left:69px;top:715px">High</div>
<div class="t" style="left:69px;top:734px">Max*</div>
<table class="m" style="left:127px;top:712px">
<tr><td style="width:70px">100.0V</td><td style="width:80px;background:#282828">99.792118</td><td style="width:70px">99.6</td><td style="width:70px;background:#282828">100.0</td><td style="width:70px">201.4m</td><td style="width:60px">447.0</td><td style="width:36px"></td></tr>
<tr><td>135.2V</td><td style="background:#282828">134.80988</td><td>133.6</td><td style="background:#282828">136.8</td><td>644.5m</td><td>447.0</td><td></td></tr>
</table>
</body></html>
